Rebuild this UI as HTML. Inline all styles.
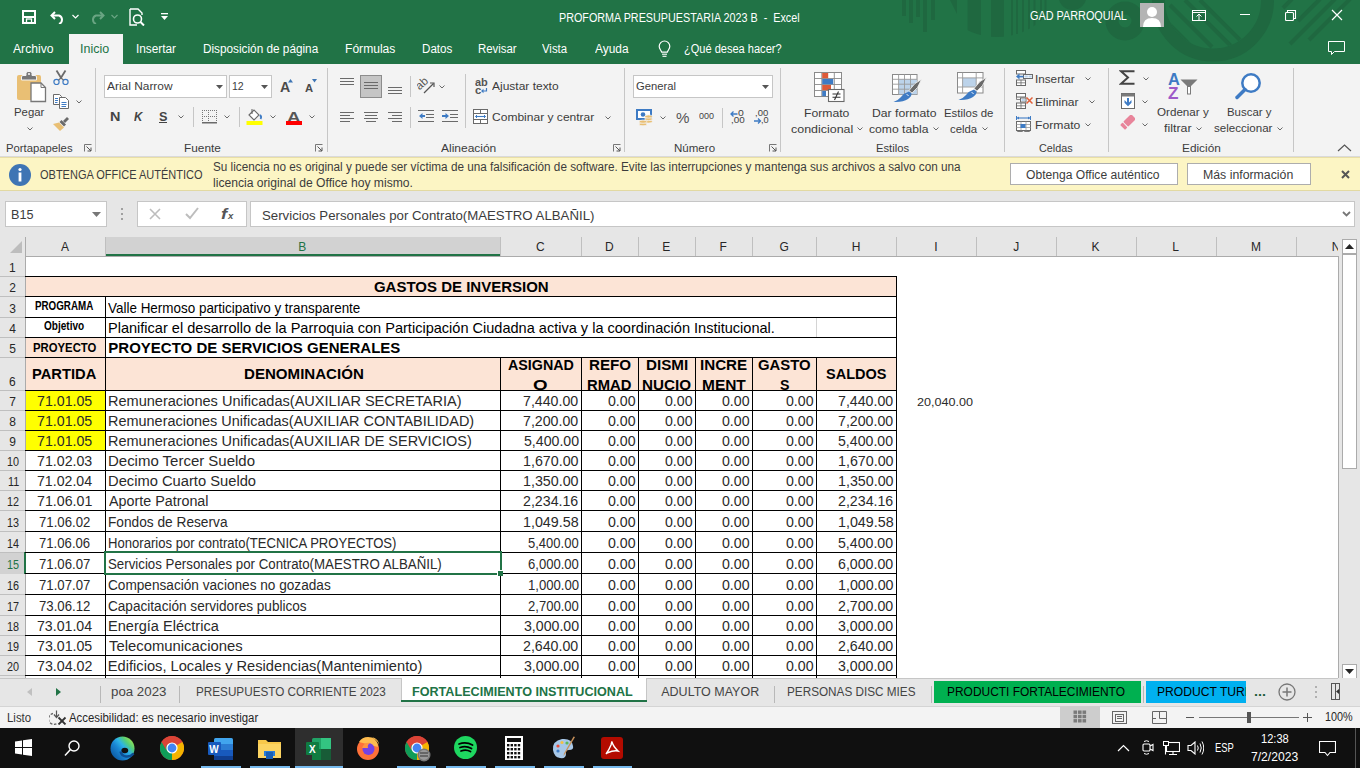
<!DOCTYPE html>
<html><head><meta charset="utf-8"><style>
html,body{margin:0;padding:0;width:1360px;height:768px;overflow:hidden;background:#fff;}
body{position:relative;font-family:"Liberation Sans",sans-serif;}
div,span,svg{position:absolute;}
span{white-space:pre;}
</style></head><body>
<div style="left:0px;top:0px;width:1360px;height:64px;background:#217346;"></div>
<svg style="left:0;top:0" width="1360" height="64"><defs><clipPath id="cc"><circle cx="997" cy="-30" r="67"/></clipPath><clipPath id="ci"><circle cx="1213" cy="0.5" r="48"/></clipPath></defs><rect x="902" y="0" width="4" height="16" fill="#1f6840"/><rect x="909" y="0" width="4" height="23" fill="#1f6840"/><rect x="916" y="0" width="4" height="17" fill="#1f6840"/><rect x="923" y="0" width="4" height="32" fill="#1f6840"/><rect x="931" y="0" width="4" height="20" fill="#1f6840"/><g fill="#1f6840" clip-path="url(#cc)"><polygon points="950,0 957,0 957,14" /><rect x="967.6" y="0" width="13.399999999999977" height="40"/><rect x="991" y="0" width="13" height="40"/><rect x="1011" y="0" width="2" height="40"/><rect x="1016" y="0" width="2" height="40"/><rect x="1022" y="0" width="2" height="40"/><rect x="1028" y="0" width="2" height="40"/><rect x="1033.5" y="0" width="2.0" height="40"/><rect x="1040" y="0" width="2" height="40"/><rect x="1044.5" y="0" width="2.0" height="40"/></g><ellipse cx="1072.5" cy="-4" rx="14" ry="14" fill="#1f6840"/><circle cx="1125" cy="21" r="13" fill="none" stroke="#1f6840" stroke-width="13"/><circle cx="1213" cy="0.5" r="54.5" fill="none" stroke="#1f6840" stroke-width="13"/><g clip-path="url(#ci)"><line x1="1167" y1="22" x2="1197" y2="52" stroke="#1f6840" stroke-width="4"/><line x1="1170" y1="5" x2="1212" y2="47" stroke="#1f6840" stroke-width="4"/><line x1="1185" y1="0" x2="1232" y2="47" stroke="#1f6840" stroke-width="4"/><line x1="1200" y1="0" x2="1240" y2="40" stroke="#1f6840" stroke-width="4"/></g><line x1="1283" y1="8" x2="1292" y2="-1" stroke="#1f6840" stroke-width="4"/><line x1="1298" y1="21" x2="1320" y2="-1" stroke="#1f6840" stroke-width="4"/><line x1="1290" y1="44" x2="1335" y2="-1" stroke="#1f6840" stroke-width="4"/><line x1="1309" y1="40" x2="1350" y2="-1" stroke="#1f6840" stroke-width="4"/></svg>
<svg style="left:22px;top:10px;" width="14" height="14" viewBox="0 0 14 14"><rect x="1" y="1" width="12" height="12" fill="none" stroke="#fff" stroke-width="2"/><rect x="2" y="6" width="10" height="2" fill="#fff"/><rect x="4.5" y="9" width="5" height="4" fill="none" stroke="#fff" stroke-width="1.3"/></svg>
<svg style="left:50px;top:9px;" width="16" height="15" viewBox="0 0 16 15"><path d="M5 3 L1.5 6.5 L5 10" fill="none" stroke="#fff" stroke-width="2"/><path d="M2 6.5 H9 A4.5 4.5 0 0 1 9 15" fill="none" stroke="#fff" stroke-width="2"/></svg>
<svg style="left:72px;top:14px;" width="7" height="5" viewBox="0 0 7 5"><path d="M0.5 1 L3.5 4 L6.5 1" fill="none" stroke="#fff" stroke-width="1.2"/></svg>
<svg style="left:89px;top:9px;" width="16" height="15" viewBox="0 0 16 15"><path d="M11 3 L14.5 6.5 L11 10" fill="none" stroke="#6aa583" stroke-width="2"/><path d="M14 6.5 H7 A4.5 4.5 0 0 0 7 15" fill="none" stroke="#6aa583" stroke-width="2"/></svg>
<svg style="left:111px;top:14px;" width="7" height="5" viewBox="0 0 7 5"><path d="M0.5 1 L3.5 4 L6.5 1" fill="none" stroke="#6aa583" stroke-width="1.2"/></svg>
<svg style="left:129px;top:8px;" width="17" height="18" viewBox="0 0 17 18"><path d="M1 1 H9 L13 5 V7" fill="none" stroke="#fff" stroke-width="1.4"/><path d="M1 1 V17 H8" fill="none" stroke="#fff" stroke-width="1.4"/><circle cx="8.5" cy="11" r="4" fill="none" stroke="#fff" stroke-width="1.6"/><line x1="11.5" y1="14" x2="15" y2="17.5" stroke="#fff" stroke-width="2"/></svg>
<svg style="left:161px;top:13px;" width="7" height="8" viewBox="0 0 7 8"><rect x="0" y="0" width="7" height="1.3" fill="#fff"/><path d="M0 3 H7 L3.5 7 Z" fill="#fff"/></svg>
<span style="left:558.64px;top:11.84px;font-size:12px;line-height:12px;color:#ffffff;transform:scaleX(0.8982);transform-origin:0 0;">PROFORMA PRESUPUESTARIA 2023 B  -  Excel</span>
<span style="left:1030.46px;top:9.84px;font-size:12px;line-height:12px;color:#ffffff;transform:scaleX(0.9045);transform-origin:0 0;">GAD PARROQUIAL</span>
<svg style="left:1140px;top:3px;" width="24" height="24" viewBox="0 0 24 24"><rect width="24" height="24" fill="#b4b4b4"/><circle cx="12" cy="9" r="5" fill="#fff"/><path d="M3 24 Q3 15 12 15 Q21 15 21 24 Z" fill="#fff"/></svg>
<svg style="left:1192px;top:10px;" width="14" height="11" viewBox="0 0 14 11"><rect x="0.5" y="0.5" width="13" height="10" fill="none" stroke="#fff" stroke-width="1"/><line x1="0.5" y1="2.5" x2="13.5" y2="2.5" stroke="#fff" stroke-width="1"/><path d="M4.5 6.5 L7 4 L9.5 6.5 M7 4.5 V10.5" fill="none" stroke="#fff" stroke-width="1"/></svg>
<div style="left:1240px;top:14px;width:10px;height:1px;background:#ffffff;"></div>
<svg style="left:1285px;top:10px;" width="12" height="11" viewBox="0 0 12 11"><rect x="0.5" y="2.5" width="8" height="8" fill="none" stroke="#fff" stroke-width="1.1" rx="1"/><path d="M2.5 2.5 V0.5 H10.5 V8.5 H8.5" fill="none" stroke="#fff" stroke-width="1.1"/></svg>
<svg style="left:1331px;top:9px;" width="12" height="12" viewBox="0 0 12 12"><path d="M1 1 L11 11 M11 1 L1 11" stroke="#fff" stroke-width="1.2"/></svg>
<div style="left:69px;top:34px;width:54px;height:30px;background:#f3f3f3;"></div>
<span style="left:13.00px;top:42.84px;font-size:12px;line-height:12px;color:#ffffff;transform:scaleX(1.0116);transform-origin:0 0;">Archivo</span>
<span style="left:80.38px;top:42.84px;font-size:12px;line-height:12px;color:#217346;transform:scaleX(1.0393);transform-origin:0 0;">Inicio</span>
<span style="left:135.94px;top:42.84px;font-size:12px;line-height:12px;color:#ffffff;transform:scaleX(0.9845);transform-origin:0 0;">Insertar</span>
<span style="left:202.81px;top:42.84px;font-size:12px;line-height:12px;color:#ffffff;transform:scaleX(0.9810);transform-origin:0 0;">Disposición de página</span>
<span style="left:345.03px;top:42.84px;font-size:12px;line-height:12px;color:#ffffff;transform:scaleX(1.0070);transform-origin:0 0;">Fórmulas</span>
<span style="left:421.57px;top:42.84px;font-size:12px;line-height:12px;color:#ffffff;transform:scaleX(0.9686);transform-origin:0 0;">Datos</span>
<span style="left:478.09px;top:42.84px;font-size:12px;line-height:12px;color:#ffffff;transform:scaleX(0.9498);transform-origin:0 0;">Revisar</span>
<span style="left:542.44px;top:42.84px;font-size:12px;line-height:12px;color:#ffffff;transform:scaleX(0.9470);transform-origin:0 0;">Vista</span>
<span style="left:595.00px;top:42.84px;font-size:12px;line-height:12px;color:#ffffff;transform:scaleX(0.9917);transform-origin:0 0;">Ayuda</span>
<svg style="left:658px;top:40px;" width="13" height="18" viewBox="0 0 13 18"><path d="M6.5 1 A5.3 5.3 0 0 1 11.8 6.3 C11.8 9 10 10 9.3 12.2 H3.7 C3 10 1.2 9 1.2 6.3 A5.3 5.3 0 0 1 6.5 1 Z" fill="none" stroke="#fff" stroke-width="1.2"/><line x1="4" y1="14.2" x2="9" y2="14.2" stroke="#fff" stroke-width="1.1"/><line x1="4.5" y1="16.3" x2="8.5" y2="16.3" stroke="#fff" stroke-width="1.1"/></svg>
<span style="left:684.28px;top:42.84px;font-size:12px;line-height:12px;color:#ffffff;transform:scaleX(0.9201);transform-origin:0 0;">¿Qué desea hacer?</span>
<svg style="left:1328px;top:41px;" width="17" height="15" viewBox="0 0 17 15"><path d="M0.5 0.5 H16.5 V10.5 H6.5 L3.5 13.5 V10.5 H0.5 Z" fill="none" stroke="#fff" stroke-width="1"/></svg>
<div style="left:0px;top:64px;width:1360px;height:92px;background:#f3f3f3;"></div>
<div style="left:0px;top:156px;width:1360px;height:1px;background:#dadada;"></div>
<div style="left:95px;top:68px;width:1px;height:84px;background:#c6c6c6;"></div>
<div style="left:327px;top:68px;width:1px;height:84px;background:#c6c6c6;"></div>
<div style="left:624px;top:68px;width:1px;height:84px;background:#c6c6c6;"></div>
<div style="left:780px;top:68px;width:1px;height:84px;background:#c6c6c6;"></div>
<div style="left:1004px;top:68px;width:1px;height:84px;background:#c6c6c6;"></div>
<div style="left:1108px;top:68px;width:1px;height:84px;background:#c6c6c6;"></div>
<div style="left:1293px;top:68px;width:1px;height:84px;background:#c6c6c6;"></div>
<span style="left:6.10px;top:142.56px;font-size:11.5px;line-height:11.5px;color:#3c3c3c;transform:scaleX(0.9816);transform-origin:0 0;">Portapapeles</span>
<span style="left:184.35px;top:142.56px;font-size:11.5px;line-height:11.5px;color:#3c3c3c;transform:scaleX(1.0283);transform-origin:0 0;">Fuente</span>
<span style="left:441.00px;top:142.56px;font-size:11.5px;line-height:11.5px;color:#3c3c3c;transform:scaleX(1.0416);transform-origin:0 0;">Alineación</span>
<span style="left:673.83px;top:142.56px;font-size:11.5px;line-height:11.5px;color:#3c3c3c;transform:scaleX(1.0037);transform-origin:0 0;">Número</span>
<span style="left:875.80px;top:142.56px;font-size:11.5px;line-height:11.5px;color:#3c3c3c;transform:scaleX(0.9771);transform-origin:0 0;">Estilos</span>
<span style="left:1039.21px;top:142.56px;font-size:11.5px;line-height:11.5px;color:#3c3c3c;transform:scaleX(0.9399);transform-origin:0 0;">Celdas</span>
<span style="left:1181.55px;top:142.56px;font-size:11.5px;line-height:11.5px;color:#3c3c3c;transform:scaleX(1.0291);transform-origin:0 0;">Edición</span>
<svg style="left:84px;top:144px;" width="8" height="8" viewBox="0 0 8 8"><path d="M0.5 7.5 V0.5 H7.5" fill="none" stroke="#777" stroke-width="1"/><path d="M2.5 2.5 L7 7 M3.5 7 H7 V3.5" fill="none" stroke="#555" stroke-width="1"/></svg>
<svg style="left:315px;top:144px;" width="8" height="8" viewBox="0 0 8 8"><path d="M0.5 7.5 V0.5 H7.5" fill="none" stroke="#777" stroke-width="1"/><path d="M2.5 2.5 L7 7 M3.5 7 H7 V3.5" fill="none" stroke="#555" stroke-width="1"/></svg>
<svg style="left:613px;top:144px;" width="8" height="8" viewBox="0 0 8 8"><path d="M0.5 7.5 V0.5 H7.5" fill="none" stroke="#777" stroke-width="1"/><path d="M2.5 2.5 L7 7 M3.5 7 H7 V3.5" fill="none" stroke="#555" stroke-width="1"/></svg>
<svg style="left:769px;top:144px;" width="8" height="8" viewBox="0 0 8 8"><path d="M0.5 7.5 V0.5 H7.5" fill="none" stroke="#777" stroke-width="1"/><path d="M2.5 2.5 L7 7 M3.5 7 H7 V3.5" fill="none" stroke="#555" stroke-width="1"/></svg>
<svg style="left:1337px;top:144px;" width="15" height="8" viewBox="0 0 15 8"><path d="M1 7 L7.5 1 L14 7" fill="none" stroke="#555" stroke-width="1.2"/></svg>
<svg style="left:16px;top:71px;" width="31" height="32" viewBox="0 0 31 32"><rect x="1" y="4" width="24" height="25" rx="2" fill="#e9bf74"/><path d="M5.5 9 V6 Q5.5 4.5 7 4.5 H10 V2.5 Q10 0.5 12 0.5 H14 Q16 0.5 16 2.5 V4.5 H19 Q20.5 4.5 20.5 6 V9 Z" fill="#777" stroke="#f3f3f3" stroke-width="1"/><circle cx="13" cy="3" r="1.1" fill="#f3f3f3"/><path d="M15 12 H25 L29.5 16.5 V30.5 H15 Z" fill="#fff" stroke="#777" stroke-width="1.3"/><path d="M25 12 V16.5 H29.5" fill="none" stroke="#777" stroke-width="1"/></svg>
<span style="left:13.84px;top:106.76px;font-size:11.5px;line-height:11.5px;color:#3c3c3c;transform:scaleX(0.9897);transform-origin:0 0;">Pegar</span>
<svg style="left:27px;top:127px;" width="6" height="4" viewBox="0 0 6 4"><path d="M0.5 0.5 L3 3 L5.5 0.5" fill="none" stroke="#6a6a6a" stroke-width="1"/></svg>
<svg style="left:53px;top:70px;" width="16" height="15" viewBox="0 0 16 15"><path d="M3.5 0.5 L8.5 8.5 M12.5 0.5 L7.5 8.5" stroke="#6a6a6a" stroke-width="1.8"/><circle cx="3.5" cy="12" r="2.6" fill="none" stroke="#3e7bc4" stroke-width="1.2"/><circle cx="12.5" cy="12" r="2.6" fill="none" stroke="#3e7bc4" stroke-width="1.2"/><path d="M5.5 10 L8 8 L10.5 10" fill="none" stroke="#6a6a6a" stroke-width="1.2"/></svg>
<svg style="left:53px;top:94px;" width="16" height="15" viewBox="0 0 16 15"><path d="M0.5 0.5 H6.5 L8.5 2.5 V10.5 H0.5 Z" fill="#fff" stroke="#6a6a6a"/><path d="M6.5 3.5 H12.5 L15.5 6.5 V14.5 H6.5 Z" fill="#fff" stroke="#6a6a6a"/><path d="M2 4.5 H5 M2 6.5 H5 M2 8.5 H4.5 M8.5 8.5 H13.5 M8.5 10.5 H13.5 M8.5 12.5 H13" stroke="#3e7bc4" stroke-width="1"/></svg>
<svg style="left:76px;top:100px;" width="6" height="4" viewBox="0 0 6 4"><path d="M0.5 0.5 L3 3 L5.5 0.5" fill="none" stroke="#6a6a6a" stroke-width="1"/></svg>
<svg style="left:53px;top:116px;" width="16" height="15" viewBox="0 0 16 15"><path d="M10 5 L14 1 L16 3 L12 7 Z" fill="#6a6a6a"/><path d="M8.5 4 L13 8.5 L11 10.5 L6.5 6 Z" fill="#6a6a6a"/><path d="M6 6.5 L11 11.5 L7 15 L0 8 Z" fill="#e9bf74"/></svg>
<div style="left:104px;top:75px;width:123px;height:23px;background:#fff;box-sizing:border-box;border:1px solid #c6c6c6;"></div>
<span style="left:107.00px;top:81.26px;font-size:11.5px;line-height:11.5px;color:#3c3c3c;transform:scaleX(1.0362);transform-origin:0 0;">Arial Narrow</span>
<svg style="left:216px;top:85px;" width="7" height="4" viewBox="0 0 7 4"><path d="M0 0 H7 L3.5 4 Z" fill="#555"/></svg>
<div style="left:229px;top:75px;width:43px;height:23px;background:#fff;box-sizing:border-box;border:1px solid #c6c6c6;"></div>
<span style="left:231.81px;top:81.26px;font-size:11.5px;line-height:11.5px;color:#3c3c3c;transform:scaleX(0.9181);transform-origin:0 0;">12</span>
<svg style="left:261px;top:85px;" width="7" height="4" viewBox="0 0 7 4"><path d="M0 0 H7 L3.5 4 Z" fill="#555"/></svg>
<span style="left:280.15px;top:80.14px;font-size:14px;line-height:14px;color:#4a4a4a;font-weight:700;transform:scaleX(1.0128);transform-origin:0 0;">A</span>
<svg style="left:288px;top:79px;" width="6" height="3.5" viewBox="0 0 6 3.5"><path d="M0 3.5 L2.5 0 L5 3.5 Z" fill="#3e75b4"/></svg>
<span style="left:305.22px;top:82.68px;font-size:11px;line-height:11px;color:#4a4a4a;font-weight:700;transform:scaleX(1.0176);transform-origin:0 0;">A</span>
<svg style="left:312px;top:79px;" width="6" height="3.5" viewBox="0 0 6 3.5"><path d="M0 0 L2.5 3.5 L5 0 Z" fill="#3e75b4"/></svg>
<span style="left:109.96px;top:110.64px;font-size:12px;line-height:12px;color:#444;font-weight:700;transform:scaleX(1.2006);transform-origin:0 0;">N</span>
<span style="left:133.57px;top:110.64px;font-size:12px;line-height:12px;color:#444;font-weight:700;font-style:italic;transform:scaleX(0.9649);transform-origin:0 0;">K</span>
<span style="left:159.02px;top:110.64px;font-size:12px;line-height:12px;color:#444;font-weight:700;transform:scaleX(1.0556);transform-origin:0 0;">S</span>
<div style="left:159px;top:122px;width:8px;height:1px;background:#444;"></div>
<svg style="left:178px;top:115px;" width="6" height="4" viewBox="0 0 6 4"><path d="M0.5 0.5 L3 3 L5.5 0.5" fill="none" stroke="#6a6a6a" stroke-width="1"/></svg>
<div style="left:193px;top:107px;width:1px;height:20px;background:#c6c6c6;"></div>
<svg style="left:202px;top:110px;" width="15" height="14" viewBox="0 0 15 14"><rect x="0" y="0" width="1" height="1" fill="#777"/><rect x="0" y="2" width="1" height="1" fill="#777"/><rect x="0" y="4" width="1" height="1" fill="#777"/><rect x="0" y="6" width="1" height="1" fill="#777"/><rect x="0" y="8" width="1" height="1" fill="#777"/><rect x="0" y="10" width="1" height="1" fill="#777"/><rect x="0" y="12" width="1" height="1" fill="#777"/><rect x="2" y="0" width="1" height="1" fill="#777"/><rect x="2" y="6" width="1" height="1" fill="#777"/><rect x="2" y="12" width="1" height="1" fill="#777"/><rect x="4" y="0" width="1" height="1" fill="#777"/><rect x="4" y="6" width="1" height="1" fill="#777"/><rect x="4" y="12" width="1" height="1" fill="#777"/><rect x="6" y="0" width="1" height="1" fill="#777"/><rect x="6" y="2" width="1" height="1" fill="#777"/><rect x="6" y="4" width="1" height="1" fill="#777"/><rect x="6" y="6" width="1" height="1" fill="#777"/><rect x="6" y="8" width="1" height="1" fill="#777"/><rect x="6" y="10" width="1" height="1" fill="#777"/><rect x="6" y="12" width="1" height="1" fill="#777"/><rect x="8" y="0" width="1" height="1" fill="#777"/><rect x="8" y="6" width="1" height="1" fill="#777"/><rect x="8" y="12" width="1" height="1" fill="#777"/><rect x="10" y="0" width="1" height="1" fill="#777"/><rect x="10" y="6" width="1" height="1" fill="#777"/><rect x="10" y="12" width="1" height="1" fill="#777"/><rect x="12" y="0" width="1" height="1" fill="#777"/><rect x="12" y="6" width="1" height="1" fill="#777"/><rect x="12" y="12" width="1" height="1" fill="#777"/><rect x="14" y="0" width="1" height="1" fill="#777"/><rect x="14" y="2" width="1" height="1" fill="#777"/><rect x="14" y="4" width="1" height="1" fill="#777"/><rect x="14" y="6" width="1" height="1" fill="#777"/><rect x="14" y="8" width="1" height="1" fill="#777"/><rect x="14" y="10" width="1" height="1" fill="#777"/><rect x="14" y="12" width="1" height="1" fill="#777"/><rect x="0" y="12" width="15" height="1.5" fill="#6a6a6a"/></svg>
<svg style="left:224px;top:115px;" width="6" height="4" viewBox="0 0 6 4"><path d="M0.5 0.5 L3 3 L5.5 0.5" fill="none" stroke="#6a6a6a" stroke-width="1"/></svg>
<div style="left:239px;top:107px;width:1px;height:20px;background:#c6c6c6;"></div>
<svg style="left:246px;top:108px;" width="18" height="17" viewBox="0 0 18 17"><path d="M3 7 L8 2 L13 7 L8 12 Z" fill="#fff" stroke="#6a6a6a" stroke-width="1.1"/><line x1="6" y1="1" x2="6" y2="6" stroke="#6a6a6a" stroke-width="1.1"/><path d="M14 7 Q16 9 14.5 11" fill="none" stroke="#3e7bc4" stroke-width="1.8"/><rect x="0.5" y="13" width="16" height="4" fill="#ffff00"/></svg>
<svg style="left:270px;top:115px;" width="6" height="4" viewBox="0 0 6 4"><path d="M0.5 0.5 L3 3 L5.5 0.5" fill="none" stroke="#6a6a6a" stroke-width="1"/></svg>
<span style="left:287.03px;top:109.64px;font-size:14px;line-height:14px;color:#555;font-weight:700;transform:scaleX(1.3326);transform-origin:0 0;">A</span>
<div style="left:286px;top:121px;width:16px;height:4px;background:#ff0000;"></div>
<svg style="left:309px;top:115px;" width="6" height="4" viewBox="0 0 6 4"><path d="M0.5 0.5 L3 3 L5.5 0.5" fill="none" stroke="#6a6a6a" stroke-width="1"/></svg>
<svg style="left:340px;top:78px;" width="14" height="9" viewBox="0 0 14 9"><rect x="0" y="0" width="14" height="1" fill="#6a6a6a"/><rect x="0" y="3" width="14" height="1" fill="#6a6a6a"/><rect x="0" y="6" width="14" height="1" fill="#6a6a6a"/></svg>
<div style="left:360px;top:75px;width:22px;height:23px;background:#c5c5c5;box-sizing:border-box;border:1px solid #8c8c8c;"></div>
<svg style="left:364px;top:82px;" width="14" height="9" viewBox="0 0 14 9"><rect x="0" y="0" width="14" height="1" fill="#6a6a6a"/><rect x="0" y="3" width="14" height="1" fill="#6a6a6a"/><rect x="0" y="6" width="14" height="1" fill="#6a6a6a"/></svg>
<svg style="left:388px;top:87px;" width="14" height="9" viewBox="0 0 14 9"><rect x="0" y="0" width="14" height="1" fill="#6a6a6a"/><rect x="0" y="3" width="14" height="1" fill="#6a6a6a"/><rect x="0" y="6" width="14" height="1" fill="#6a6a6a"/></svg>
<div style="left:410px;top:76px;width:1px;height:21px;background:#c6c6c6;"></div>
<svg style="left:417px;top:77px;" width="19" height="17" viewBox="0 0 19 17"><text x="0" y="0" transform="translate(2.5,13.5) rotate(-42)" font-family="Liberation Sans" font-size="11.5" fill="#555">ab</text><line x1="7" y1="16" x2="16.5" y2="6.5" stroke="#555" stroke-width="1.2"/><path d="M13 6 H17 V10" fill="none" stroke="#555" stroke-width="1.2"/></svg>
<svg style="left:439px;top:85px;" width="6" height="4" viewBox="0 0 6 4"><path d="M0.5 0.5 L3 3 L5.5 0.5" fill="none" stroke="#6a6a6a" stroke-width="1"/></svg>
<div style="left:465px;top:74px;width:1px;height:54px;background:#c6c6c6;"></div>
<svg style="left:340px;top:112px;" width="14" height="12" viewBox="0 0 14 12"><rect x="0" y="0" width="14" height="1" fill="#6a6a6a"/><rect x="0" y="3" width="10" height="1" fill="#6a6a6a"/><rect x="0" y="6" width="14" height="1" fill="#6a6a6a"/><rect x="0" y="9" width="10" height="1" fill="#6a6a6a"/></svg>
<svg style="left:364px;top:112px;" width="14" height="12" viewBox="0 0 14 12"><rect x="0.0" y="0" width="14" height="1" fill="#6a6a6a"/><rect x="1.0" y="3" width="12" height="1" fill="#6a6a6a"/><rect x="0.0" y="6" width="14" height="1" fill="#6a6a6a"/><rect x="2.0" y="9" width="10" height="1" fill="#6a6a6a"/></svg>
<svg style="left:388px;top:112px;" width="14" height="12" viewBox="0 0 14 12"><rect x="0" y="0" width="14" height="1" fill="#6a6a6a"/><rect x="4" y="3" width="10" height="1" fill="#6a6a6a"/><rect x="0" y="6" width="14" height="1" fill="#6a6a6a"/><rect x="4" y="9" width="10" height="1" fill="#6a6a6a"/></svg>
<div style="left:410px;top:107px;width:1px;height:21px;background:#c6c6c6;"></div>
<svg style="left:418px;top:110px;" width="16" height="13" viewBox="0 0 16 13"><rect x="0" y="0" width="16" height="1" fill="#6a6a6a"/><rect x="8" y="4" width="8" height="1" fill="#6a6a6a"/><rect x="8" y="7" width="8" height="1" fill="#6a6a6a"/><rect x="0" y="11" width="16" height="1" fill="#6a6a6a"/><path d="M1 6 L4.5 3 V5 H7 V7 H4.5 V9 Z" fill="#3e7bc4"/></svg>
<svg style="left:442px;top:110px;" width="16" height="13" viewBox="0 0 16 13"><rect x="0" y="0" width="16" height="1" fill="#6a6a6a"/><rect x="8" y="4" width="8" height="1" fill="#6a6a6a"/><rect x="8" y="7" width="8" height="1" fill="#6a6a6a"/><rect x="0" y="11" width="16" height="1" fill="#6a6a6a"/><path d="M7 6 L3.5 3 V5 H0 V7 H3.5 V9 Z" fill="#3e7bc4"/></svg>
<span style="left:474.67px;top:76.71px;font-size:10.5px;line-height:10.5px;color:#555;font-weight:700;transform:scaleX(1.0437);transform-origin:0 0;">ab</span>
<span style="left:474.55px;top:84.68px;font-size:11px;line-height:11px;color:#555;font-weight:700;transform:scaleX(1.0309);transform-origin:0 0;">c</span>
<svg style="left:481px;top:88px;" width="7" height="6" viewBox="0 0 7 6"><path d="M5.5 0 V3 H2" fill="none" stroke="#3e7bc4" stroke-width="1.2"/><path d="M0 3 L2.5 0.8 V5.2 Z" fill="#3e7bc4"/></svg>
<span style="left:491.90px;top:81.16px;font-size:11.5px;line-height:11.5px;color:#3c3c3c;transform:scaleX(1.0422);transform-origin:0 0;">Ajustar texto</span>
<svg style="left:473px;top:109px;" width="15" height="15" viewBox="0 0 15 15"><rect x="0.5" y="0.5" width="14" height="14" fill="#fff" stroke="#6a6a6a"/><path d="M0.5 4.5 H14.5 M0.5 10.5 H14.5 M7.5 0.5 V4.5 M7.5 10.5 V14.5" stroke="#6a6a6a" fill="none"/><path d="M2.5 7.5 H12.5" stroke="#3e7bc4" stroke-width="1.1"/><path d="M4 6 L2.5 7.5 L4 9 M11 6 L12.5 7.5 L11 9" stroke="#3e7bc4" fill="none"/></svg>
<span style="left:491.90px;top:112.01px;font-size:11.5px;line-height:11.5px;color:#3c3c3c;transform:scaleX(1.0464);transform-origin:0 0;">Combinar y centrar</span>
<svg style="left:605px;top:116px;" width="6" height="4" viewBox="0 0 6 4"><path d="M0.5 0.5 L3 3 L5.5 0.5" fill="none" stroke="#6a6a6a" stroke-width="1"/></svg>
<div style="left:633px;top:75px;width:140px;height:23px;background:#fff;box-sizing:border-box;border:1px solid #c6c6c6;"></div>
<span style="left:636.44px;top:81.16px;font-size:11.5px;line-height:11.5px;color:#3c3c3c;transform:scaleX(0.9757);transform-origin:0 0;">General</span>
<svg style="left:762px;top:85px;" width="7" height="4" viewBox="0 0 7 4"><path d="M0 0 H7 L3.5 4 Z" fill="#555"/></svg>
<svg style="left:636px;top:109px;" width="17" height="17" viewBox="0 0 17 17"><rect x="1" y="1" width="14" height="9" fill="#fff" stroke="#3e7bc4" stroke-width="2"/><circle cx="7" cy="5.5" r="2.3" fill="#3e7bc4"/><g fill="#e9bf74" stroke="#f3f3f3" stroke-width="0.8"><ellipse cx="12.5" cy="12.5" rx="3.8" ry="1.6"/><ellipse cx="12.5" cy="10" rx="3.8" ry="1.6"/><ellipse cx="12.5" cy="7.5" rx="3.8" ry="1.6"/><ellipse cx="7" cy="15.2" rx="3.8" ry="1.6"/><ellipse cx="7" cy="12.7" rx="3.8" ry="1.6"/></g></svg>
<svg style="left:660px;top:116px;" width="6" height="4" viewBox="0 0 6 4"><path d="M0.5 0.5 L3 3 L5.5 0.5" fill="none" stroke="#6a6a6a" stroke-width="1"/></svg>
<span style="left:676.47px;top:110.92px;font-size:14.5px;line-height:14.5px;color:#555;transform:scaleX(1.0429);transform-origin:0 0;">%</span>
<span style="left:699.39px;top:112.38px;font-size:9px;line-height:9px;color:#444;transform:scaleX(0.9958);transform-origin:0 0;">000</span>
<div style="left:722px;top:108px;width:1px;height:20px;background:#c6c6c6;"></div>
<span style="left:737.58px;top:109.10px;font-size:8.5px;line-height:8.5px;color:#444;transform:scaleX(1.2255);transform-origin:0 0;">0</span>
<span style="left:730.61px;top:116.30px;font-size:8.5px;line-height:8.5px;color:#444;transform:scaleX(1.1625);transform-origin:0 0;">,00</span>
<svg style="left:729.5px;top:110.5px;" width="8" height="6" viewBox="0 0 8 6"><path d="M1 3 H7.5 M3.5 0.5 L1 3 L3.5 5.5" fill="none" stroke="#3e7bc4" stroke-width="1.3"/></svg>
<span style="left:755.15px;top:109.10px;font-size:8.5px;line-height:8.5px;color:#444;transform:scaleX(1.1160);transform-origin:0 0;">,00</span>
<span style="left:761.18px;top:116.30px;font-size:8.5px;line-height:8.5px;color:#444;transform:scaleX(1.0771);transform-origin:0 0;">,0</span>
<svg style="left:753.5px;top:117.5px;" width="8" height="6" viewBox="0 0 8 6"><path d="M0 3 H6.5 M4 0.5 L6.5 3 L4 5.5" fill="none" stroke="#3e7bc4" stroke-width="1.3"/></svg>
<svg style="left:805px;top:66px;" width="190" height="40" viewBox="0 0 190 40"><rect x="9.5" y="6.5" width="27" height="24" fill="#fff" stroke="#8a8a8a"/><path d="M16.8 6.5 V30.5 M29.3 6.5 V30.5 M9.5 12.5 H36.5 M9.5 18.5 H36.5 M9.5 24.5 H36.5" stroke="#8a8a8a" stroke-width="0.9"/><rect x="17.2" y="7" width="6" height="5.2" fill="#dd5a38"/><rect x="17.2" y="13" width="11" height="5.2" fill="#3e7bc4"/><rect x="17.2" y="19" width="8.8" height="5.2" fill="#dd5a38"/><rect x="17.2" y="25" width="3.8" height="5.2" fill="#3e7bc4"/><rect x="23.5" y="23.5" width="15.5" height="12" fill="#fff" stroke="#6a6a6a" stroke-width="1.1"/><path d="M27.5 28 H35.5 M27.5 31.2 H35.5 M29.5 34 L33.5 25.5" stroke="#333" stroke-width="1.1"/><rect x="87.5" y="8.5" width="24.5" height="20" fill="#fff" stroke="#8a8a8a"/><rect x="93.6" y="13.3" width="18.2" height="15" fill="#bcd3ea"/><path d="M93.6 8.5 V28.5 M99.5 8.5 V28.5 M105.5 8.5 V28.5 M87.5 13.3 H112 M87.5 18.2 H112 M87.5 23.2 H112" stroke="#9a9a9a" stroke-width="0.9"/><path d="M116.5 13.5 L110 17.5 L104 24.5 L107 27 L112.5 21.5 Z" fill="#6a6a6a" stroke="#f3f3f3" stroke-width="0.8"/><path d="M104 25.5 Q99 27 96 31 Q93 34.5 88.5 36 Q98 36.5 103 33 Q107 30 106.5 27.5 Z" fill="#3e7bc4"/><path d="M101.5 28.5 Q103 28.5 103.5 30" stroke="#fff" stroke-width="0.8" fill="none"/><rect x="152.5" y="6.5" width="25.5" height="20.5" fill="#fff" stroke="#8a8a8a"/><rect x="157.6" y="11.9" width="13.6" height="9" fill="#bcd3ea"/><path d="M157.6 6.5 V27 M171.2 6.5 V27 M152.5 11.9 H178 M152.5 21 H178" stroke="#9a9a9a" stroke-width="0.9"/><path d="M181.5 11.5 L175 15.5 L169 22.5 L172 25 L177.5 19.5 Z" fill="#6a6a6a" stroke="#f3f3f3" stroke-width="0.8"/><path d="M169 23.5 Q164 25 161 29 Q158 32.5 153.5 34 Q163 34.5 168 31 Q172 28 171.5 25.5 Z" fill="#3e7bc4"/><path d="M166.5 26.5 Q168 26.5 168.5 28" stroke="#fff" stroke-width="0.8" fill="none"/></svg>
<span style="left:804.42px;top:107.56px;font-size:11.5px;line-height:11.5px;color:#3c3c3c;transform:scaleX(1.0604);transform-origin:0 0;">Formato</span>
<span style="left:791.30px;top:124.06px;font-size:11.5px;line-height:11.5px;color:#3c3c3c;transform:scaleX(1.0818);transform-origin:0 0;">condicional</span>
<svg style="left:857px;top:127px;" width="6" height="4" viewBox="0 0 6 4"><path d="M0.5 0.5 L3 3 L5.5 0.5" fill="none" stroke="#6a6a6a" stroke-width="1"/></svg>
<span style="left:872.42px;top:107.56px;font-size:11.5px;line-height:11.5px;color:#3c3c3c;transform:scaleX(1.0617);transform-origin:0 0;">Dar formato</span>
<span style="left:869.11px;top:124.06px;font-size:11.5px;line-height:11.5px;color:#3c3c3c;transform:scaleX(1.0560);transform-origin:0 0;">como tabla</span>
<svg style="left:933px;top:127px;" width="6" height="4" viewBox="0 0 6 4"><path d="M0.5 0.5 L3 3 L5.5 0.5" fill="none" stroke="#6a6a6a" stroke-width="1"/></svg>
<span style="left:944.49px;top:107.56px;font-size:11.5px;line-height:11.5px;color:#3c3c3c;transform:scaleX(0.9914);transform-origin:0 0;">Estilos de</span>
<span style="left:950.35px;top:124.06px;font-size:11.5px;line-height:11.5px;color:#3c3c3c;transform:scaleX(0.9880);transform-origin:0 0;">celda</span>
<svg style="left:982px;top:127px;" width="6" height="4" viewBox="0 0 6 4"><path d="M0.5 0.5 L3 3 L5.5 0.5" fill="none" stroke="#6a6a6a" stroke-width="1"/></svg>
<svg style="left:1016px;top:70px;" width="17" height="16" viewBox="0 0 17 16"><g fill="#fff" stroke="#6a6a6a" stroke-width="1"><rect x="0.5" y="0.5" width="9" height="3.5"/><rect x="0.5" y="10" width="9" height="5.5"/><rect x="7.5" y="4.5" width="9" height="4"/></g><path d="M5 10 V15.5 M0.5 12.8 H9.5" stroke="#6a6a6a" stroke-width="0.8"/><rect x="8.5" y="5.5" width="3.3" height="2" fill="#bcd3ea"/><rect x="12.5" y="5.5" width="3.3" height="2" fill="#bcd3ea"/><path d="M0 6.5 L3.5 3.5 V9.5 Z" fill="#3e7bc4"/><rect x="3" y="5.8" width="4.5" height="1.6" fill="#3e7bc4"/></svg>
<span style="left:1034.55px;top:73.96px;font-size:11.5px;line-height:11.5px;color:#3c3c3c;transform:scaleX(1.0180);transform-origin:0 0;">Insertar</span>
<svg style="left:1085px;top:77px;" width="6" height="4" viewBox="0 0 6 4"><path d="M0.5 0.5 L3 3 L5.5 0.5" fill="none" stroke="#6a6a6a" stroke-width="1"/></svg>
<svg style="left:1016px;top:93px;" width="17" height="16" viewBox="0 0 17 16"><g fill="#fff" stroke="#6a6a6a" stroke-width="1"><rect x="0.5" y="0.5" width="9" height="3.5"/><rect x="0.5" y="10" width="9" height="5.5"/><rect x="4.5" y="5" width="5.5" height="4"/></g><path d="M5 10 V15.5 M0.5 12.8 H9.5 M0.5 4 V6.5 H4.5" fill="none" stroke="#6a6a6a" stroke-width="0.8"/><rect x="5.5" y="6" width="3.5" height="2" fill="#bcd3ea"/><path d="M10.5 4.5 L16.5 10.5 M16.5 4.5 L10.5 10.5" stroke="#e0603a" stroke-width="1.5"/></svg>
<span style="left:1034.63px;top:96.86px;font-size:11.5px;line-height:11.5px;color:#3c3c3c;transform:scaleX(1.0489);transform-origin:0 0;">Eliminar</span>
<svg style="left:1089px;top:100px;" width="6" height="4" viewBox="0 0 6 4"><path d="M0.5 0.5 L3 3 L5.5 0.5" fill="none" stroke="#6a6a6a" stroke-width="1"/></svg>
<svg style="left:1016px;top:116px;" width="16" height="16" viewBox="0 0 16 16"><path d="M0.5 0 V4 M14.5 0 V4" stroke="#3e7bc4" stroke-width="1"/><path d="M1 2 H14" stroke="#3e7bc4" stroke-width="1.1"/><path d="M1 2 L3 0.5 V3.5 Z M14 2 L12 0.5 V3.5 Z" fill="#3e7bc4"/><rect x="0.5" y="5.5" width="14" height="9" fill="#fff" stroke="#6a6a6a"/><path d="M0.5 8.5 H14.5 M0.5 11.5 H14.5 M5 5.5 V14.5 M10 5.5 V14.5" stroke="#9a9a9a" stroke-width="0.8"/><path d="M1 14.5 Q1 15.5 2 15.5 H6 Q7 15.5 7 14.5 M8 14.5 Q8 15.5 9 15.5 H13 Q14 15.5 14 14.5" fill="none" stroke="#6a6a6a" stroke-width="0.9"/><rect x="4.5" y="8" width="5" height="4" fill="#3e7bc4"/></svg>
<span style="left:1034.63px;top:119.66px;font-size:11.5px;line-height:11.5px;color:#3c3c3c;transform:scaleX(1.0580);transform-origin:0 0;">Formato</span>
<svg style="left:1085px;top:123px;" width="6" height="4" viewBox="0 0 6 4"><path d="M0.5 0.5 L3 3 L5.5 0.5" fill="none" stroke="#6a6a6a" stroke-width="1"/></svg>
<svg style="left:1119px;top:69px;" width="17" height="17" viewBox="0 0 17 17"><path d="M15.5 2.2 H2 L9 8.5 L2 14.8 H15.5" fill="none" stroke="#444" stroke-width="2" stroke-linejoin="miter"/></svg>
<svg style="left:1143px;top:77px;" width="6" height="4" viewBox="0 0 6 4"><path d="M0.5 0.5 L3 3 L5.5 0.5" fill="none" stroke="#6a6a6a" stroke-width="1"/></svg>
<svg style="left:1121px;top:93px;" width="14" height="16" viewBox="0 0 14 16"><rect x="0.5" y="0.5" width="13" height="15" fill="#fff" stroke="#6a6a6a"/><rect x="0.5" y="0.5" width="13" height="3" fill="#7a7a7a"/><path d="M6 5 H8 V9.5 L10.5 7 V9.8 L7 13.3 L3.5 9.8 V7 L6 9.5 Z" fill="#3e7bc4"/></svg>
<svg style="left:1142px;top:100px;" width="6" height="4" viewBox="0 0 6 4"><path d="M0.5 0.5 L3 3 L5.5 0.5" fill="none" stroke="#6a6a6a" stroke-width="1"/></svg>
<svg style="left:1120px;top:115px;" width="15" height="15" viewBox="0 0 15 15"><g transform="rotate(-45 7.5 7.5)" fill="#e8849a"><rect x="5" y="4" width="11" height="7" rx="1"/><rect x="0.5" y="4" width="3.5" height="7" rx="0.8"/></g></svg>
<svg style="left:1142px;top:123px;" width="6" height="4" viewBox="0 0 6 4"><path d="M0.5 0.5 L3 3 L5.5 0.5" fill="none" stroke="#6a6a6a" stroke-width="1"/></svg>
<span style="left:1167.59px;top:71.02px;font-size:16.5px;line-height:16.5px;color:#3e7bc4;font-weight:700;transform:scaleX(0.9950);transform-origin:0 0;">A</span>
<span style="left:1168.49px;top:85.02px;font-size:16.5px;line-height:16.5px;color:#9d5ac8;font-weight:700;transform:scaleX(1.0374);transform-origin:0 0;">Z</span>
<svg style="left:1180px;top:79px;" width="18" height="16" viewBox="0 0 18 16"><path d="M0.5 0.5 H17.5 L11 7 V15.5 H7 V7 Z" fill="#7a7a7a"/><path d="M8 8 V14.5 H10 V8" fill="#fff"/></svg>
<svg style="left:1234px;top:72px;" width="29" height="28" viewBox="0 0 29 28"><circle cx="17" cy="11" r="8.7" fill="#fff" stroke="#3e7bc4" stroke-width="2.5"/><line x1="3" y1="25.5" x2="11" y2="17.5" stroke="#3e7bc4" stroke-width="3.5" stroke-linecap="round"/></svg>
<span style="left:1157.28px;top:107.26px;font-size:11.5px;line-height:11.5px;color:#3c3c3c;transform:scaleX(1.0119);transform-origin:0 0;">Ordenar y</span>
<span style="left:1164.21px;top:123.26px;font-size:11.5px;line-height:11.5px;color:#3c3c3c;transform:scaleX(1.0800);transform-origin:0 0;">filtrar</span>
<svg style="left:1196px;top:127px;" width="6" height="4" viewBox="0 0 6 4"><path d="M0.5 0.5 L3 3 L5.5 0.5" fill="none" stroke="#6a6a6a" stroke-width="1"/></svg>
<span style="left:1226.79px;top:107.26px;font-size:11.5px;line-height:11.5px;color:#3c3c3c;transform:scaleX(0.9928);transform-origin:0 0;">Buscar y</span>
<span style="left:1214.35px;top:123.26px;font-size:11.5px;line-height:11.5px;color:#3c3c3c;transform:scaleX(1.0049);transform-origin:0 0;">seleccionar</span>
<svg style="left:1277px;top:127px;" width="6" height="4" viewBox="0 0 6 4"><path d="M0.5 0.5 L3 3 L5.5 0.5" fill="none" stroke="#6a6a6a" stroke-width="1"/></svg>
<div style="left:0px;top:157px;width:1360px;height:34px;background:#fcf5c4;"></div>
<div style="left:0px;top:157px;width:1360px;height:1px;background:#e8dea6;"></div>
<div style="left:0px;top:190px;width:1360px;height:1px;background:#e2d9a2;"></div>
<svg style="left:9px;top:164px;" width="22" height="22" viewBox="0 0 22 22"><circle cx="11" cy="11" r="11" fill="#3f75b4"/><circle cx="11" cy="5.5" r="1.6" fill="#fff"/><rect x="9.6" y="8.5" width="2.8" height="9" fill="#fff"/></svg>
<span style="left:40.01px;top:168.59px;font-size:12px;line-height:12px;color:#3c3c3c;transform:scaleX(0.9165);transform-origin:0 0;">OBTENGA OFFICE AUTÉNTICO</span>
<span style="left:213.22px;top:160.84px;font-size:12px;line-height:12px;color:#3c3c3c;transform:scaleX(0.9771);transform-origin:0 0;">Su licencia no es original y puede ser víctima de una falsificación de software. Evite las interrupciones y mantenga sus archivos a salvo con una</span>
<span style="left:212.96px;top:176.84px;font-size:12px;line-height:12px;color:#3c3c3c;transform:scaleX(1.0104);transform-origin:0 0;">licencia original de Office hoy mismo.</span>
<div style="left:1010px;top:163px;width:168px;height:22px;background:#fff;box-sizing:border-box;border:1px solid #adadad;"></div>
<span style="left:1026.16px;top:168.84px;font-size:12px;line-height:12px;color:#3c3c3c;transform:scaleX(1.0075);transform-origin:0 0;">Obtenga Office auténtico</span>
<div style="left:1187px;top:163px;width:124px;height:22px;background:#fff;box-sizing:border-box;border:1px solid #adadad;"></div>
<span style="left:1202.52px;top:168.84px;font-size:12px;line-height:12px;color:#3c3c3c;transform:scaleX(1.0257);transform-origin:0 0;">Más información</span>
<svg style="left:1341px;top:170px;" width="9" height="9" viewBox="0 0 9 9"><path d="M1 1 L8 8 M8 1 L1 8" stroke="#555" stroke-width="2"/></svg>
<div style="left:0px;top:191px;width:1360px;height:46px;background:#e6e6e6;"></div>
<div style="left:5px;top:201px;width:102px;height:26px;background:#fff;box-sizing:border-box;border:1px solid #c6c6c6;"></div>
<span style="left:11.49px;top:209.01px;font-size:12.5px;line-height:12.5px;color:#3c3c3c;transform:scaleX(1.0120);transform-origin:0 0;">B15</span>
<svg style="left:92px;top:212px;" width="9" height="5" viewBox="0 0 9 5"><path d="M0 0 H9 L4.5 5 Z" fill="#777"/></svg>
<div style="left:121px;top:208px;width:2px;height:2px;background:#a0a0a0;"></div>
<div style="left:121px;top:213px;width:2px;height:2px;background:#a0a0a0;"></div>
<div style="left:121px;top:218px;width:2px;height:2px;background:#a0a0a0;"></div>
<div style="left:137px;top:201px;width:110px;height:26px;background:#fff;box-sizing:border-box;border:1px solid #c6c6c6;"></div>
<svg style="left:149px;top:208px;" width="12" height="12" viewBox="0 0 12 12"><path d="M1 1 L11 11 M11 1 L1 11" stroke="#bdbdbd" stroke-width="1.6"/></svg>
<svg style="left:185px;top:207px;" width="14" height="13" viewBox="0 0 14 13"><path d="M1 7 L5 11 L13 1" fill="none" stroke="#bdbdbd" stroke-width="2"/></svg>
<span style="left:221.36px;top:207.14px;font-size:14px;line-height:14px;color:#555;font-weight:700;font-style:italic;transform:scaleX(1.3158);transform-origin:0 0;font-family:"Liberation Serif";">f</span>
<span style="left:228.38px;top:212.38px;font-size:9px;line-height:9px;color:#555;font-weight:700;font-style:italic;transform:scaleX(1.0582);transform-origin:0 0;font-family:"Liberation Serif";">x</span>
<div style="left:250px;top:201px;width:1105px;height:26px;background:#fff;box-sizing:border-box;border:1px solid #c6c6c6;"></div>
<span style="left:261.80px;top:208.59px;font-size:13px;line-height:13px;color:#3c3c3c;transform:scaleX(1.0179);transform-origin:0 0;">Servicios Personales por Contrato(MAESTRO ALBAÑIL)</span>
<svg style="left:1342px;top:211px;" width="9" height="6" viewBox="0 0 9 6"><path d="M1 1 L4.5 4.5 L8 1" fill="none" stroke="#777" stroke-width="1.8"/></svg>
<div style="left:0px;top:237px;width:1338px;height:20px;background:#e6e6e6;"></div>
<div style="left:0px;top:256px;width:1338px;height:1px;background:#ababab;"></div>
<div style="left:0px;top:237px;width:25px;height:441px;background:#e6e6e6;"></div>
<div style="left:25px;top:237px;width:1px;height:441px;background:#ababab;"></div>
<svg style="left:10px;top:241px;" width="12" height="12" viewBox="0 0 12 12"><path d="M12 0 V12 H0 Z" fill="#bdbdbd"/></svg>
<div style="left:26px;top:257px;width:1312px;height:421px;background:#fff;"></div>
<div style="left:105px;top:237px;width:395px;height:19px;background:#d2d2d2;"></div>
<div style="left:105px;top:254px;width:396px;height:2px;background:#217346;"></div>
<div style="left:105px;top:237px;width:1px;height:19px;background:#bfbfbf;"></div>
<span style="left:61.01px;top:240.84px;font-size:12px;line-height:12px;color:#262626;">A</span>
<div style="left:500px;top:237px;width:1px;height:19px;background:#bfbfbf;"></div>
<span style="left:298.33px;top:240.84px;font-size:12px;line-height:12px;color:#217346;">B</span>
<div style="left:581px;top:237px;width:1px;height:19px;background:#bfbfbf;"></div>
<span style="left:536.09px;top:240.84px;font-size:12px;line-height:12px;color:#262626;">C</span>
<div style="left:638px;top:237px;width:1px;height:19px;background:#bfbfbf;"></div>
<span style="left:604.97px;top:240.84px;font-size:12px;line-height:12px;color:#262626;">D</span>
<div style="left:695px;top:237px;width:1px;height:19px;background:#bfbfbf;"></div>
<span style="left:662.27px;top:240.84px;font-size:12px;line-height:12px;color:#262626;">E</span>
<div style="left:752px;top:237px;width:1px;height:19px;background:#bfbfbf;"></div>
<span style="left:719.60px;top:240.84px;font-size:12px;line-height:12px;color:#262626;">F</span>
<div style="left:816px;top:237px;width:1px;height:19px;background:#bfbfbf;"></div>
<span style="left:779.47px;top:240.84px;font-size:12px;line-height:12px;color:#262626;">G</span>
<div style="left:896px;top:237px;width:1px;height:19px;background:#bfbfbf;"></div>
<span style="left:851.68px;top:240.84px;font-size:12px;line-height:12px;color:#262626;">H</span>
<div style="left:976px;top:237px;width:1px;height:19px;background:#bfbfbf;"></div>
<span style="left:934.35px;top:240.84px;font-size:12px;line-height:12px;color:#262626;">I</span>
<div style="left:1056px;top:237px;width:1px;height:19px;background:#bfbfbf;"></div>
<span style="left:1013.36px;top:240.84px;font-size:12px;line-height:12px;color:#262626;">J</span>
<div style="left:1136px;top:237px;width:1px;height:19px;background:#bfbfbf;"></div>
<span style="left:1091.59px;top:240.84px;font-size:12px;line-height:12px;color:#262626;">K</span>
<div style="left:1216px;top:237px;width:1px;height:19px;background:#bfbfbf;"></div>
<span style="left:1172.37px;top:240.84px;font-size:12px;line-height:12px;color:#262626;">L</span>
<div style="left:1296px;top:237px;width:1px;height:19px;background:#bfbfbf;"></div>
<span style="left:1251.02px;top:240.84px;font-size:12px;line-height:12px;color:#262626;">M</span>
<span style="left:1331.68px;top:240.84px;font-size:12px;line-height:12px;color:#262626;">N</span>
<div style="left:0px;top:276px;width:25px;height:1px;background:#bfbfbf;"></div>
<span style="left:8.99px;top:261.84px;font-size:12px;line-height:12px;color:#262626;">1</span>
<div style="left:0px;top:296px;width:25px;height:1px;background:#bfbfbf;"></div>
<span style="left:9.17px;top:281.84px;font-size:12px;line-height:12px;color:#262626;">2</span>
<div style="left:0px;top:317px;width:25px;height:1px;background:#bfbfbf;"></div>
<span style="left:9.17px;top:302.84px;font-size:12px;line-height:12px;color:#262626;">3</span>
<div style="left:0px;top:337px;width:25px;height:1px;background:#bfbfbf;"></div>
<span style="left:9.23px;top:322.84px;font-size:12px;line-height:12px;color:#262626;">4</span>
<div style="left:0px;top:357px;width:25px;height:1px;background:#bfbfbf;"></div>
<span style="left:9.17px;top:342.84px;font-size:12px;line-height:12px;color:#262626;">5</span>
<div style="left:0px;top:390px;width:25px;height:1px;background:#bfbfbf;"></div>
<span style="left:9.11px;top:375.84px;font-size:12px;line-height:12px;color:#262626;">6</span>
<div style="left:0px;top:410px;width:25px;height:1px;background:#bfbfbf;"></div>
<span style="left:9.17px;top:395.84px;font-size:12px;line-height:12px;color:#262626;">7</span>
<div style="left:0px;top:430px;width:25px;height:1px;background:#bfbfbf;"></div>
<span style="left:9.14px;top:415.84px;font-size:12px;line-height:12px;color:#262626;">8</span>
<div style="left:0px;top:450px;width:25px;height:1px;background:#bfbfbf;"></div>
<span style="left:9.17px;top:435.84px;font-size:12px;line-height:12px;color:#262626;">9</span>
<div style="left:0px;top:470px;width:25px;height:1px;background:#bfbfbf;"></div>
<span style="left:7.09px;top:455.84px;font-size:12px;line-height:12px;color:#262626;transform:scaleX(0.9000);transform-origin:0 0;">10</span>
<div style="left:0px;top:490px;width:25px;height:1px;background:#bfbfbf;"></div>
<span style="left:7.55px;top:475.84px;font-size:12px;line-height:12px;color:#262626;transform:scaleX(0.9000);transform-origin:0 0;">11</span>
<div style="left:0px;top:510px;width:25px;height:1px;background:#bfbfbf;"></div>
<span style="left:7.17px;top:495.84px;font-size:12px;line-height:12px;color:#262626;transform:scaleX(0.9000);transform-origin:0 0;">12</span>
<div style="left:0px;top:531px;width:25px;height:1px;background:#bfbfbf;"></div>
<span style="left:7.12px;top:516.84px;font-size:12px;line-height:12px;color:#262626;transform:scaleX(0.9000);transform-origin:0 0;">13</span>
<div style="left:0px;top:552px;width:25px;height:1px;background:#bfbfbf;"></div>
<span style="left:7.06px;top:537.84px;font-size:12px;line-height:12px;color:#262626;transform:scaleX(0.9000);transform-origin:0 0;">14</span>
<div style="left:0px;top:573px;width:25px;height:1px;background:#bfbfbf;"></div>
<div style="left:0px;top:553px;width:24px;height:21px;background:#d2d2d2;"></div>
<div style="left:24px;top:552px;width:2px;height:22px;background:#217346;"></div>
<span style="left:7.12px;top:558.84px;font-size:12px;line-height:12px;color:#217346;transform:scaleX(0.9000);transform-origin:0 0;">15</span>
<div style="left:0px;top:594px;width:25px;height:1px;background:#bfbfbf;"></div>
<span style="left:7.12px;top:579.84px;font-size:12px;line-height:12px;color:#262626;transform:scaleX(0.9000);transform-origin:0 0;">16</span>
<div style="left:0px;top:615px;width:25px;height:1px;background:#bfbfbf;"></div>
<span style="left:7.17px;top:600.84px;font-size:12px;line-height:12px;color:#262626;transform:scaleX(0.9000);transform-origin:0 0;">17</span>
<div style="left:0px;top:635px;width:25px;height:1px;background:#bfbfbf;"></div>
<span style="left:7.12px;top:620.84px;font-size:12px;line-height:12px;color:#262626;transform:scaleX(0.9000);transform-origin:0 0;">18</span>
<div style="left:0px;top:655px;width:25px;height:1px;background:#bfbfbf;"></div>
<span style="left:7.14px;top:640.84px;font-size:12px;line-height:12px;color:#262626;transform:scaleX(0.9000);transform-origin:0 0;">19</span>
<div style="left:0px;top:675px;width:25px;height:1px;background:#bfbfbf;"></div>
<span style="left:7.23px;top:660.84px;font-size:12px;line-height:12px;color:#262626;transform:scaleX(0.9000);transform-origin:0 0;">20</span>
<div style="left:26px;top:277px;width:870px;height:19px;background:#fce4d6;"></div>
<div style="left:26px;top:338px;width:79px;height:19px;background:#fce4d6;"></div>
<div style="left:26px;top:358px;width:870px;height:32px;background:#fce4d6;"></div>
<div style="left:26px;top:391px;width:79px;height:19px;background:#ffff00;"></div>
<div style="left:26px;top:411px;width:79px;height:19px;background:#ffff00;"></div>
<div style="left:26px;top:431px;width:79px;height:19px;background:#ffff00;"></div>
<div style="left:25px;top:276px;width:872px;height:1px;background:#000;"></div>
<div style="left:25px;top:296px;width:872px;height:1px;background:#000;"></div>
<div style="left:25px;top:317px;width:872px;height:1px;background:#000;"></div>
<div style="left:25px;top:337px;width:872px;height:1px;background:#000;"></div>
<div style="left:25px;top:357px;width:872px;height:1px;background:#000;"></div>
<div style="left:25px;top:390px;width:872px;height:1px;background:#000;"></div>
<div style="left:25px;top:410px;width:872px;height:1px;background:#000;"></div>
<div style="left:25px;top:430px;width:872px;height:1px;background:#000;"></div>
<div style="left:25px;top:450px;width:872px;height:1px;background:#000;"></div>
<div style="left:25px;top:470px;width:872px;height:1px;background:#000;"></div>
<div style="left:25px;top:490px;width:872px;height:1px;background:#000;"></div>
<div style="left:25px;top:510px;width:872px;height:1px;background:#000;"></div>
<div style="left:25px;top:531px;width:872px;height:1px;background:#000;"></div>
<div style="left:25px;top:552px;width:872px;height:1px;background:#000;"></div>
<div style="left:25px;top:573px;width:872px;height:1px;background:#000;"></div>
<div style="left:25px;top:594px;width:872px;height:1px;background:#000;"></div>
<div style="left:25px;top:615px;width:872px;height:1px;background:#000;"></div>
<div style="left:25px;top:635px;width:872px;height:1px;background:#000;"></div>
<div style="left:25px;top:655px;width:872px;height:1px;background:#000;"></div>
<div style="left:25px;top:675px;width:872px;height:1px;background:#000;"></div>
<div style="left:105px;top:276px;width:1px;height:403px;background:#000;"></div>
<div style="left:500px;top:357px;width:1px;height:322px;background:#000;"></div>
<div style="left:581px;top:357px;width:1px;height:322px;background:#000;"></div>
<div style="left:638px;top:357px;width:1px;height:322px;background:#000;"></div>
<div style="left:695px;top:357px;width:1px;height:322px;background:#000;"></div>
<div style="left:752px;top:357px;width:1px;height:322px;background:#000;"></div>
<div style="left:816px;top:357px;width:1px;height:322px;background:#000;"></div>
<div style="left:896px;top:276px;width:1px;height:403px;background:#000;"></div>
<div style="left:105px;top:277px;width:1px;height:19px;background:#fce4d6;"></div>
<div style="left:816px;top:318px;width:1px;height:19px;background:#d4d4d4;"></div>
<div style="left:104px;top:551px;width:398px;height:2px;background:#217346;"></div>
<div style="left:104px;top:573px;width:393px;height:2px;background:#217346;"></div>
<div style="left:104px;top:551px;width:2px;height:24px;background:#217346;"></div>
<div style="left:500px;top:551px;width:2px;height:19px;background:#217346;"></div>
<div style="left:497px;top:570px;width:7px;height:1px;background:#fff;"></div>
<div style="left:497px;top:570px;width:1px;height:7px;background:#fff;"></div>
<div style="left:498px;top:571px;width:5px;height:5px;background:#217346;"></div>
<span style="left:373.90px;top:279.30px;font-size:15px;line-height:15px;color:#000;font-weight:700;">GASTOS DE INVERSION</span>
<span style="left:35.06px;top:300.24px;font-size:12px;line-height:12px;color:#000;font-weight:700;transform:scaleX(0.8162);transform-origin:0 0;">PROGRAMA</span>
<span style="left:108.13px;top:300.30px;font-size:15px;line-height:15px;color:#000;transform:scaleX(0.8963);transform-origin:0 0;">Valle Hermoso participativo y transparente</span>
<span style="left:44.40px;top:319.84px;font-size:12px;line-height:12px;color:#000;font-weight:700;transform:scaleX(0.8376);transform-origin:0 0;">Objetivo</span>
<span style="left:107.59px;top:320.30px;font-size:15px;line-height:15px;color:#000;transform:scaleX(0.9694);transform-origin:0 0;">Planificar el desarrollo de la Parroquia con Participación Ciudadna activa y la coordinación Institucional.</span>
<span style="left:33.06px;top:341.74px;font-size:12px;line-height:12px;color:#000;font-weight:700;transform:scaleX(0.9435);transform-origin:0 0;">PROYECTO</span>
<span style="left:108.33px;top:339.90px;font-size:15px;line-height:15px;color:#000;font-weight:700;">PROYECTO DE SERVICIOS GENERALES</span>
<span style="left:31.94px;top:366.74px;font-size:14px;line-height:14px;color:#000;font-weight:700;transform:scaleX(1.0514);transform-origin:0 0;">PARTIDA</span>
<span style="left:243.72px;top:366.54px;font-size:14px;line-height:14px;color:#000;font-weight:700;transform:scaleX(1.0774);transform-origin:0 0;">DENOMINACIÓN</span>
<span style="left:507.64px;top:357.94px;font-size:14px;line-height:14px;color:#000;font-weight:700;transform:scaleX(1.0215);transform-origin:0 0;">ASIGNAD</span>
<span style="left:533.25px;top:378.14px;font-size:14px;line-height:14px;color:#000;font-weight:700;transform:scaleX(1.3361);transform-origin:0 0;">O</span>
<span style="left:588.51px;top:357.94px;font-size:14px;line-height:14px;color:#000;font-weight:700;transform:scaleX(1.0835);transform-origin:0 0;">REFO</span>
<span style="left:587.44px;top:378.14px;font-size:14px;line-height:14px;color:#000;font-weight:700;transform:scaleX(1.0578);transform-origin:0 0;">RMAD</span>
<span style="left:646.01px;top:357.94px;font-size:14px;line-height:14px;color:#000;font-weight:700;transform:scaleX(1.0856);transform-origin:0 0;">DISMI</span>
<span style="left:641.51px;top:378.14px;font-size:14px;line-height:14px;color:#000;font-weight:700;transform:scaleX(1.0869);transform-origin:0 0;">NUCIO</span>
<span style="left:699.82px;top:357.94px;font-size:14px;line-height:14px;color:#000;font-weight:700;transform:scaleX(1.0821);transform-origin:0 0;">INCRE</span>
<span style="left:701.69px;top:378.14px;font-size:14px;line-height:14px;color:#000;font-weight:700;transform:scaleX(1.1045);transform-origin:0 0;">MENT</span>
<span style="left:758.10px;top:357.94px;font-size:14px;line-height:14px;color:#000;font-weight:700;transform:scaleX(1.0626);transform-origin:0 0;">GASTO</span>
<span style="left:779.88px;top:378.14px;font-size:14px;line-height:14px;color:#000;font-weight:700;transform:scaleX(1.0119);transform-origin:0 0;">S</span>
<span style="left:826.27px;top:366.74px;font-size:14px;line-height:14px;color:#000;font-weight:700;transform:scaleX(1.0348);transform-origin:0 0;">SALDOS</span>
<span style="left:37.29px;top:394.07px;font-size:14.67px;line-height:14.67px;color:#2a2a2a;transform:scaleX(0.9687);transform-origin:0 0;">71.01.05</span>
<span style="left:107.84px;top:394.07px;font-size:14.67px;line-height:14.67px;color:#2a2a2a;transform:scaleX(0.9918);transform-origin:0 0;">Remuneraciones Unificadas(AUXILIAR SECRETARIA)</span>
<span style="left:523.49px;top:394.07px;font-size:14.67px;line-height:14.67px;color:#2a2a2a;transform:scaleX(0.9674);transform-origin:0 0;">7,440.00</span>
<span style="left:608.13px;top:394.07px;font-size:14.67px;line-height:14.67px;color:#2a2a2a;transform:scaleX(0.9660);transform-origin:0 0;">0.00</span>
<span style="left:665.03px;top:394.07px;font-size:14.67px;line-height:14.67px;color:#2a2a2a;transform:scaleX(0.9660);transform-origin:0 0;">0.00</span>
<span style="left:722.03px;top:394.07px;font-size:14.67px;line-height:14.67px;color:#2a2a2a;transform:scaleX(0.9660);transform-origin:0 0;">0.00</span>
<span style="left:786.03px;top:394.07px;font-size:14.67px;line-height:14.67px;color:#2a2a2a;transform:scaleX(0.9660);transform-origin:0 0;">0.00</span>
<span style="left:838.29px;top:394.07px;font-size:14.67px;line-height:14.67px;color:#2a2a2a;transform:scaleX(0.9674);transform-origin:0 0;">7,440.00</span>
<span style="left:37.29px;top:414.07px;font-size:14.67px;line-height:14.67px;color:#2a2a2a;transform:scaleX(0.9687);transform-origin:0 0;">71.01.05</span>
<span style="left:107.84px;top:414.07px;font-size:14.67px;line-height:14.67px;color:#2a2a2a;transform:scaleX(0.9865);transform-origin:0 0;">Remuneraciones Unificadas(AUXILIAR CONTABILIDAD)</span>
<span style="left:523.49px;top:414.07px;font-size:14.67px;line-height:14.67px;color:#2a2a2a;transform:scaleX(0.9674);transform-origin:0 0;">7,200.00</span>
<span style="left:608.13px;top:414.07px;font-size:14.67px;line-height:14.67px;color:#2a2a2a;transform:scaleX(0.9660);transform-origin:0 0;">0.00</span>
<span style="left:665.03px;top:414.07px;font-size:14.67px;line-height:14.67px;color:#2a2a2a;transform:scaleX(0.9660);transform-origin:0 0;">0.00</span>
<span style="left:722.03px;top:414.07px;font-size:14.67px;line-height:14.67px;color:#2a2a2a;transform:scaleX(0.9660);transform-origin:0 0;">0.00</span>
<span style="left:786.03px;top:414.07px;font-size:14.67px;line-height:14.67px;color:#2a2a2a;transform:scaleX(0.9660);transform-origin:0 0;">0.00</span>
<span style="left:838.29px;top:414.07px;font-size:14.67px;line-height:14.67px;color:#2a2a2a;transform:scaleX(0.9674);transform-origin:0 0;">7,200.00</span>
<span style="left:37.29px;top:434.07px;font-size:14.67px;line-height:14.67px;color:#2a2a2a;transform:scaleX(0.9687);transform-origin:0 0;">71.01.05</span>
<span style="left:107.84px;top:434.07px;font-size:14.67px;line-height:14.67px;color:#2a2a2a;transform:scaleX(0.9889);transform-origin:0 0;">Remuneraciones Unificadas(AUXILIAR DE SERVICIOS)</span>
<span style="left:523.63px;top:434.07px;font-size:14.67px;line-height:14.67px;color:#2a2a2a;transform:scaleX(0.9649);transform-origin:0 0;">5,400.00</span>
<span style="left:608.13px;top:434.07px;font-size:14.67px;line-height:14.67px;color:#2a2a2a;transform:scaleX(0.9660);transform-origin:0 0;">0.00</span>
<span style="left:665.03px;top:434.07px;font-size:14.67px;line-height:14.67px;color:#2a2a2a;transform:scaleX(0.9660);transform-origin:0 0;">0.00</span>
<span style="left:722.03px;top:434.07px;font-size:14.67px;line-height:14.67px;color:#2a2a2a;transform:scaleX(0.9660);transform-origin:0 0;">0.00</span>
<span style="left:786.03px;top:434.07px;font-size:14.67px;line-height:14.67px;color:#2a2a2a;transform:scaleX(0.9660);transform-origin:0 0;">0.00</span>
<span style="left:838.43px;top:434.07px;font-size:14.67px;line-height:14.67px;color:#2a2a2a;transform:scaleX(0.9649);transform-origin:0 0;">5,400.00</span>
<span style="left:37.29px;top:454.07px;font-size:14.67px;line-height:14.67px;color:#2a2a2a;transform:scaleX(0.9687);transform-origin:0 0;">71.02.03</span>
<span style="left:107.80px;top:454.07px;font-size:14.67px;line-height:14.67px;color:#2a2a2a;transform:scaleX(1.0211);transform-origin:0 0;">Decimo Tercer Sueldo</span>
<span style="left:523.13px;top:454.07px;font-size:14.67px;line-height:14.67px;color:#2a2a2a;transform:scaleX(0.9738);transform-origin:0 0;">1,670.00</span>
<span style="left:608.13px;top:454.07px;font-size:14.67px;line-height:14.67px;color:#2a2a2a;transform:scaleX(0.9660);transform-origin:0 0;">0.00</span>
<span style="left:665.03px;top:454.07px;font-size:14.67px;line-height:14.67px;color:#2a2a2a;transform:scaleX(0.9660);transform-origin:0 0;">0.00</span>
<span style="left:722.03px;top:454.07px;font-size:14.67px;line-height:14.67px;color:#2a2a2a;transform:scaleX(0.9660);transform-origin:0 0;">0.00</span>
<span style="left:786.03px;top:454.07px;font-size:14.67px;line-height:14.67px;color:#2a2a2a;transform:scaleX(0.9660);transform-origin:0 0;">0.00</span>
<span style="left:837.93px;top:454.07px;font-size:14.67px;line-height:14.67px;color:#2a2a2a;transform:scaleX(0.9738);transform-origin:0 0;">1,670.00</span>
<span style="left:37.29px;top:474.07px;font-size:14.67px;line-height:14.67px;color:#2a2a2a;transform:scaleX(0.9661);transform-origin:0 0;">71.02.04</span>
<span style="left:107.82px;top:474.07px;font-size:14.67px;line-height:14.67px;color:#2a2a2a;transform:scaleX(1.0040);transform-origin:0 0;">Decimo Cuarto Sueldo</span>
<span style="left:523.13px;top:474.07px;font-size:14.67px;line-height:14.67px;color:#2a2a2a;transform:scaleX(0.9738);transform-origin:0 0;">1,350.00</span>
<span style="left:608.13px;top:474.07px;font-size:14.67px;line-height:14.67px;color:#2a2a2a;transform:scaleX(0.9660);transform-origin:0 0;">0.00</span>
<span style="left:665.03px;top:474.07px;font-size:14.67px;line-height:14.67px;color:#2a2a2a;transform:scaleX(0.9660);transform-origin:0 0;">0.00</span>
<span style="left:722.03px;top:474.07px;font-size:14.67px;line-height:14.67px;color:#2a2a2a;transform:scaleX(0.9660);transform-origin:0 0;">0.00</span>
<span style="left:786.03px;top:474.07px;font-size:14.67px;line-height:14.67px;color:#2a2a2a;transform:scaleX(0.9660);transform-origin:0 0;">0.00</span>
<span style="left:837.93px;top:474.07px;font-size:14.67px;line-height:14.67px;color:#2a2a2a;transform:scaleX(0.9738);transform-origin:0 0;">1,350.00</span>
<span style="left:37.29px;top:494.07px;font-size:14.67px;line-height:14.67px;color:#2a2a2a;transform:scaleX(0.9700);transform-origin:0 0;">71.06.01</span>
<span style="left:109.00px;top:494.07px;font-size:14.67px;line-height:14.67px;color:#2a2a2a;transform:scaleX(0.9769);transform-origin:0 0;">Aporte Patronal</span>
<span style="left:523.49px;top:494.07px;font-size:14.67px;line-height:14.67px;color:#2a2a2a;transform:scaleX(0.9687);transform-origin:0 0;">2,234.16</span>
<span style="left:608.13px;top:494.07px;font-size:14.67px;line-height:14.67px;color:#2a2a2a;transform:scaleX(0.9660);transform-origin:0 0;">0.00</span>
<span style="left:665.03px;top:494.07px;font-size:14.67px;line-height:14.67px;color:#2a2a2a;transform:scaleX(0.9660);transform-origin:0 0;">0.00</span>
<span style="left:722.03px;top:494.07px;font-size:14.67px;line-height:14.67px;color:#2a2a2a;transform:scaleX(0.9660);transform-origin:0 0;">0.00</span>
<span style="left:786.03px;top:494.07px;font-size:14.67px;line-height:14.67px;color:#2a2a2a;transform:scaleX(0.9660);transform-origin:0 0;">0.00</span>
<span style="left:838.29px;top:494.07px;font-size:14.67px;line-height:14.67px;color:#2a2a2a;transform:scaleX(0.9687);transform-origin:0 0;">2,234.16</span>
<span style="left:39.34px;top:515.07px;font-size:14.67px;line-height:14.67px;color:#2a2a2a;transform:scaleX(0.8993);transform-origin:0 0;">71.06.02</span>
<span style="left:107.90px;top:515.07px;font-size:14.67px;line-height:14.67px;color:#2a2a2a;transform:scaleX(0.9344);transform-origin:0 0;">Fondos de Reserva</span>
<span style="left:523.13px;top:515.07px;font-size:14.67px;line-height:14.67px;color:#2a2a2a;transform:scaleX(0.9751);transform-origin:0 0;">1,049.58</span>
<span style="left:608.13px;top:515.07px;font-size:14.67px;line-height:14.67px;color:#2a2a2a;transform:scaleX(0.9660);transform-origin:0 0;">0.00</span>
<span style="left:665.03px;top:515.07px;font-size:14.67px;line-height:14.67px;color:#2a2a2a;transform:scaleX(0.9660);transform-origin:0 0;">0.00</span>
<span style="left:722.03px;top:515.07px;font-size:14.67px;line-height:14.67px;color:#2a2a2a;transform:scaleX(0.9660);transform-origin:0 0;">0.00</span>
<span style="left:786.03px;top:515.07px;font-size:14.67px;line-height:14.67px;color:#2a2a2a;transform:scaleX(0.9660);transform-origin:0 0;">0.00</span>
<span style="left:837.93px;top:515.07px;font-size:14.67px;line-height:14.67px;color:#2a2a2a;transform:scaleX(0.9751);transform-origin:0 0;">1,049.58</span>
<span style="left:39.34px;top:536.07px;font-size:14.67px;line-height:14.67px;color:#2a2a2a;transform:scaleX(0.8969);transform-origin:0 0;">71.06.06</span>
<span style="left:107.95px;top:536.07px;font-size:14.67px;line-height:14.67px;color:#2a2a2a;transform:scaleX(0.8927);transform-origin:0 0;">Honorarios por contrato(TECNICA PROYECTOS)</span>
<span style="left:527.98px;top:536.07px;font-size:14.67px;line-height:14.67px;color:#2a2a2a;transform:scaleX(0.8880);transform-origin:0 0;">5,400.00</span>
<span style="left:608.13px;top:536.07px;font-size:14.67px;line-height:14.67px;color:#2a2a2a;transform:scaleX(0.9660);transform-origin:0 0;">0.00</span>
<span style="left:665.03px;top:536.07px;font-size:14.67px;line-height:14.67px;color:#2a2a2a;transform:scaleX(0.9660);transform-origin:0 0;">0.00</span>
<span style="left:722.03px;top:536.07px;font-size:14.67px;line-height:14.67px;color:#2a2a2a;transform:scaleX(0.9660);transform-origin:0 0;">0.00</span>
<span style="left:786.03px;top:536.07px;font-size:14.67px;line-height:14.67px;color:#2a2a2a;transform:scaleX(0.9660);transform-origin:0 0;">0.00</span>
<span style="left:838.43px;top:536.07px;font-size:14.67px;line-height:14.67px;color:#2a2a2a;transform:scaleX(0.9649);transform-origin:0 0;">5,400.00</span>
<span style="left:39.34px;top:557.07px;font-size:14.67px;line-height:14.67px;color:#2a2a2a;transform:scaleX(0.8993);transform-origin:0 0;">71.06.07</span>
<span style="left:108.40px;top:557.07px;font-size:14.67px;line-height:14.67px;color:#2a2a2a;transform:scaleX(0.9066);transform-origin:0 0;">Servicios Personales por Contrato(MAESTRO ALBAÑIL)</span>
<span style="left:527.85px;top:557.07px;font-size:14.67px;line-height:14.67px;color:#2a2a2a;transform:scaleX(0.8904);transform-origin:0 0;">6,000.00</span>
<span style="left:608.13px;top:557.07px;font-size:14.67px;line-height:14.67px;color:#2a2a2a;transform:scaleX(0.9660);transform-origin:0 0;">0.00</span>
<span style="left:665.03px;top:557.07px;font-size:14.67px;line-height:14.67px;color:#2a2a2a;transform:scaleX(0.9660);transform-origin:0 0;">0.00</span>
<span style="left:722.03px;top:557.07px;font-size:14.67px;line-height:14.67px;color:#2a2a2a;transform:scaleX(0.9660);transform-origin:0 0;">0.00</span>
<span style="left:786.03px;top:557.07px;font-size:14.67px;line-height:14.67px;color:#2a2a2a;transform:scaleX(0.9660);transform-origin:0 0;">0.00</span>
<span style="left:838.29px;top:557.07px;font-size:14.67px;line-height:14.67px;color:#2a2a2a;transform:scaleX(0.9674);transform-origin:0 0;">6,000.00</span>
<span style="left:39.34px;top:578.07px;font-size:14.67px;line-height:14.67px;color:#2a2a2a;transform:scaleX(0.8993);transform-origin:0 0;">71.07.07</span>
<span style="left:108.32px;top:578.07px;font-size:14.67px;line-height:14.67px;color:#2a2a2a;transform:scaleX(0.9298);transform-origin:0 0;">Compensación vaciones no gozadas</span>
<span style="left:527.51px;top:578.07px;font-size:14.67px;line-height:14.67px;color:#2a2a2a;transform:scaleX(0.8963);transform-origin:0 0;">1,000.00</span>
<span style="left:608.13px;top:578.07px;font-size:14.67px;line-height:14.67px;color:#2a2a2a;transform:scaleX(0.9660);transform-origin:0 0;">0.00</span>
<span style="left:665.03px;top:578.07px;font-size:14.67px;line-height:14.67px;color:#2a2a2a;transform:scaleX(0.9660);transform-origin:0 0;">0.00</span>
<span style="left:722.03px;top:578.07px;font-size:14.67px;line-height:14.67px;color:#2a2a2a;transform:scaleX(0.9660);transform-origin:0 0;">0.00</span>
<span style="left:786.03px;top:578.07px;font-size:14.67px;line-height:14.67px;color:#2a2a2a;transform:scaleX(0.9660);transform-origin:0 0;">0.00</span>
<span style="left:837.93px;top:578.07px;font-size:14.67px;line-height:14.67px;color:#2a2a2a;transform:scaleX(0.9738);transform-origin:0 0;">1,000.00</span>
<span style="left:39.34px;top:599.07px;font-size:14.67px;line-height:14.67px;color:#2a2a2a;transform:scaleX(0.8993);transform-origin:0 0;">73.06.12</span>
<span style="left:108.32px;top:599.07px;font-size:14.67px;line-height:14.67px;color:#2a2a2a;transform:scaleX(0.9272);transform-origin:0 0;">Capacitación servidores publicos</span>
<span style="left:527.85px;top:599.07px;font-size:14.67px;line-height:14.67px;color:#2a2a2a;transform:scaleX(0.8904);transform-origin:0 0;">2,700.00</span>
<span style="left:608.13px;top:599.07px;font-size:14.67px;line-height:14.67px;color:#2a2a2a;transform:scaleX(0.9660);transform-origin:0 0;">0.00</span>
<span style="left:665.03px;top:599.07px;font-size:14.67px;line-height:14.67px;color:#2a2a2a;transform:scaleX(0.9660);transform-origin:0 0;">0.00</span>
<span style="left:722.03px;top:599.07px;font-size:14.67px;line-height:14.67px;color:#2a2a2a;transform:scaleX(0.9660);transform-origin:0 0;">0.00</span>
<span style="left:786.03px;top:599.07px;font-size:14.67px;line-height:14.67px;color:#2a2a2a;transform:scaleX(0.9660);transform-origin:0 0;">0.00</span>
<span style="left:838.29px;top:599.07px;font-size:14.67px;line-height:14.67px;color:#2a2a2a;transform:scaleX(0.9674);transform-origin:0 0;">2,700.00</span>
<span style="left:37.29px;top:619.07px;font-size:14.67px;line-height:14.67px;color:#2a2a2a;transform:scaleX(0.9661);transform-origin:0 0;">73.01.04</span>
<span style="left:107.84px;top:619.07px;font-size:14.67px;line-height:14.67px;color:#2a2a2a;transform:scaleX(0.9924);transform-origin:0 0;">Energía Eléctrica</span>
<span style="left:523.63px;top:619.07px;font-size:14.67px;line-height:14.67px;color:#2a2a2a;transform:scaleX(0.9649);transform-origin:0 0;">3,000.00</span>
<span style="left:608.13px;top:619.07px;font-size:14.67px;line-height:14.67px;color:#2a2a2a;transform:scaleX(0.9660);transform-origin:0 0;">0.00</span>
<span style="left:665.03px;top:619.07px;font-size:14.67px;line-height:14.67px;color:#2a2a2a;transform:scaleX(0.9660);transform-origin:0 0;">0.00</span>
<span style="left:722.03px;top:619.07px;font-size:14.67px;line-height:14.67px;color:#2a2a2a;transform:scaleX(0.9660);transform-origin:0 0;">0.00</span>
<span style="left:786.03px;top:619.07px;font-size:14.67px;line-height:14.67px;color:#2a2a2a;transform:scaleX(0.9660);transform-origin:0 0;">0.00</span>
<span style="left:838.43px;top:619.07px;font-size:14.67px;line-height:14.67px;color:#2a2a2a;transform:scaleX(0.9649);transform-origin:0 0;">3,000.00</span>
<span style="left:37.29px;top:639.07px;font-size:14.67px;line-height:14.67px;color:#2a2a2a;transform:scaleX(0.9687);transform-origin:0 0;">73.01.05</span>
<span style="left:108.70px;top:639.07px;font-size:14.67px;line-height:14.67px;color:#2a2a2a;transform:scaleX(1.0130);transform-origin:0 0;">Telecomunicaciones</span>
<span style="left:523.49px;top:639.07px;font-size:14.67px;line-height:14.67px;color:#2a2a2a;transform:scaleX(0.9674);transform-origin:0 0;">2,640.00</span>
<span style="left:608.13px;top:639.07px;font-size:14.67px;line-height:14.67px;color:#2a2a2a;transform:scaleX(0.9660);transform-origin:0 0;">0.00</span>
<span style="left:665.03px;top:639.07px;font-size:14.67px;line-height:14.67px;color:#2a2a2a;transform:scaleX(0.9660);transform-origin:0 0;">0.00</span>
<span style="left:722.03px;top:639.07px;font-size:14.67px;line-height:14.67px;color:#2a2a2a;transform:scaleX(0.9660);transform-origin:0 0;">0.00</span>
<span style="left:786.03px;top:639.07px;font-size:14.67px;line-height:14.67px;color:#2a2a2a;transform:scaleX(0.9660);transform-origin:0 0;">0.00</span>
<span style="left:838.29px;top:639.07px;font-size:14.67px;line-height:14.67px;color:#2a2a2a;transform:scaleX(0.9674);transform-origin:0 0;">2,640.00</span>
<span style="left:37.29px;top:659.07px;font-size:14.67px;line-height:14.67px;color:#2a2a2a;transform:scaleX(0.9712);transform-origin:0 0;">73.04.02</span>
<span style="left:107.83px;top:659.07px;font-size:14.67px;line-height:14.67px;color:#2a2a2a;">Edificios, Locales y Residencias(Mantenimiento)</span>
<span style="left:523.63px;top:659.07px;font-size:14.67px;line-height:14.67px;color:#2a2a2a;transform:scaleX(0.9649);transform-origin:0 0;">3,000.00</span>
<span style="left:608.13px;top:659.07px;font-size:14.67px;line-height:14.67px;color:#2a2a2a;transform:scaleX(0.9660);transform-origin:0 0;">0.00</span>
<span style="left:665.03px;top:659.07px;font-size:14.67px;line-height:14.67px;color:#2a2a2a;transform:scaleX(0.9660);transform-origin:0 0;">0.00</span>
<span style="left:722.03px;top:659.07px;font-size:14.67px;line-height:14.67px;color:#2a2a2a;transform:scaleX(0.9660);transform-origin:0 0;">0.00</span>
<span style="left:786.03px;top:659.07px;font-size:14.67px;line-height:14.67px;color:#2a2a2a;transform:scaleX(0.9660);transform-origin:0 0;">0.00</span>
<span style="left:838.43px;top:659.07px;font-size:14.67px;line-height:14.67px;color:#2a2a2a;transform:scaleX(0.9649);transform-origin:0 0;">3,000.00</span>
<span style="left:917.37px;top:396.68px;font-size:11px;line-height:11px;color:#2a2a2a;transform:scaleX(1.1455);transform-origin:0 0;">20,040.00</span>
<div style="left:1338px;top:237px;width:22px;height:441px;background:#e6e6e6;"></div>
<div style="left:1338px;top:256px;width:1px;height:422px;background:#ababab;"></div>
<div style="left:1342px;top:239px;width:15px;height:15px;background:#fff;box-sizing:border-box;border:1px solid #ababab;"></div>
<svg style="left:1345px;top:244px;" width="9" height="5" viewBox="0 0 9 5"><path d="M0 5 L4.5 0 L9 5 Z" fill="#262626"/></svg>
<div style="left:1342px;top:254px;width:15px;height:215px;background:#fff;box-sizing:border-box;border:1px solid #ababab;"></div>
<div style="left:1342px;top:664px;width:15px;height:15px;background:#fff;box-sizing:border-box;border:1px solid #ababab;"></div>
<svg style="left:1345px;top:669px;" width="9" height="5" viewBox="0 0 9 5"><path d="M0 0 L4.5 5 L9 0 Z" fill="#262626"/></svg>
<div style="left:0px;top:678px;width:1360px;height:28px;background:#e6e6e6;"></div>
<div style="left:0px;top:678px;width:1338px;height:1px;background:#c6c6c6;"></div>
<svg style="left:26.5px;top:687.5px;" width="5" height="8" viewBox="0 0 5 8"><path d="M5 0 V8 L0 4 Z" fill="#c0c0c0"/></svg>
<svg style="left:56px;top:687.5px;" width="5" height="8" viewBox="0 0 5 8"><path d="M0 0 V8 L5 4 Z" fill="#217346"/></svg>
<div style="left:100px;top:686px;width:1px;height:17px;background:#b8b8b8;"></div>
<span style="left:111.14px;top:685.91px;font-size:12.5px;line-height:12.5px;color:#444;transform:scaleX(1.0627);transform-origin:0 0;">poa 2023</span>
<div style="left:179px;top:686px;width:1px;height:17px;background:#b8b8b8;"></div>
<span style="left:196.06px;top:685.91px;font-size:12.5px;line-height:12.5px;color:#444;transform:scaleX(0.9372);transform-origin:0 0;">PRESUPUESTO CORRIENTE 2023</span>
<div style="left:401px;top:678px;width:246px;height:24px;background:#fff;"></div>
<div style="left:401px;top:678px;width:1px;height:24px;background:#c6c6c6;"></div>
<div style="left:646px;top:678px;width:1px;height:24px;background:#c6c6c6;"></div>
<div style="left:401px;top:700px;width:246px;height:2px;background:#217346;"></div>
<span style="left:412.18px;top:685.91px;font-size:12.5px;line-height:12.5px;color:#217346;font-weight:700;transform:scaleX(1.0080);transform-origin:0 0;">FORTALECIMIENTO INSTITUCIONAL</span>
<span style="left:661.25px;top:685.91px;font-size:12.5px;line-height:12.5px;color:#444;">ADULTO MAYOR</span>
<div style="left:774px;top:686px;width:1px;height:17px;background:#b8b8b8;"></div>
<span style="left:787.06px;top:685.91px;font-size:12.5px;line-height:12.5px;color:#444;transform:scaleX(0.9390);transform-origin:0 0;">PERSONAS DISC MIES</span>
<div style="left:931px;top:686px;width:1px;height:17px;background:#b8b8b8;"></div>
<div style="left:934px;top:681px;width:207px;height:22px;background:#00b050;"></div>
<span style="left:947.04px;top:685.91px;font-size:12.5px;line-height:12.5px;color:#000;transform:scaleX(0.9563);transform-origin:0 0;">PRODUCTI FORTALECIMIENTO</span>
<div style="left:1143px;top:686px;width:1px;height:17px;background:#b8b8b8;"></div>
<div style="left:1146px;top:681px;width:100px;height:22px;background:#00b0f0;"></div>
<span style="left:1157.03px;top:685.91px;font-size:12.5px;line-height:12.5px;color:#000;transform:scaleX(0.9705);transform-origin:0 0;">PRODUCT TURI</span>
<div style="left:1246px;top:680px;width:8px;height:24px;background:#e6e6e6;"></div>
<span style="left:1254.07px;top:685.84px;font-size:12px;line-height:12px;color:#1e5c3a;font-weight:700;transform:scaleX(1.1905);transform-origin:0 0;">...</span>
<svg style="left:1278px;top:683px;" width="18" height="18" viewBox="0 0 18 18"><circle cx="9" cy="9" r="8" fill="none" stroke="#777" stroke-width="1.3"/><path d="M9 4.5 V13.5 M4.5 9 H13.5" stroke="#777" stroke-width="1.5"/></svg>
<div style="left:1315px;top:686px;width:2px;height:2px;background:#b0b0b0;"></div>
<div style="left:1315px;top:691px;width:2px;height:2px;background:#b0b0b0;"></div>
<div style="left:1315px;top:696px;width:2px;height:2px;background:#b0b0b0;"></div>
<svg style="left:1331px;top:683px;" width="9" height="17" viewBox="0 0 9 17"><rect x="0.5" y="0.5" width="8" height="16" fill="none" stroke="#555"/><path d="M4.5 0 V17" stroke="#555"/><path d="M5 8.5 L8 6 V11 Z" fill="#333"/></svg>
<div style="left:0px;top:706px;width:1360px;height:22px;background:#f3f3f3;"></div>
<div style="left:0px;top:706px;width:1360px;height:1px;background:#d4d4d4;"></div>
<span style="left:6.59px;top:711.84px;font-size:12px;line-height:12px;color:#333;transform:scaleX(0.9506);transform-origin:0 0;">Listo</span>
<svg style="left:49px;top:710px;" width="18" height="15" viewBox="0 0 18 15"><path d="M4 3.5 A5.5 5.5 0 1 0 8 13.5" fill="none" stroke="#666" stroke-width="1.3" stroke-dasharray="2.5 1.5"/><path d="M7.5 0.5 V7" stroke="#555" stroke-width="1.2"/><path d="M5 4.5 L7.5 7.5 L10 4.5" fill="none" stroke="#555" stroke-width="1.2"/><path d="M9.5 7.5 L16.5 14.5 M16.5 7.5 L9.5 14.5" stroke="#333" stroke-width="1.8"/></svg>
<span style="left:69.00px;top:711.84px;font-size:12px;line-height:12px;color:#262626;transform:scaleX(0.9488);transform-origin:0 0;">Accesibilidad: es necesario investigar</span>
<div style="left:1060px;top:706px;width:40px;height:22px;background:#cdcdcd;"></div>
<svg style="left:1073px;top:710px;" width="14" height="13" viewBox="0 0 14 13"><rect x="0.5" y="0.5" width="3.6" height="3.4" fill="#7a7a7a"/><rect x="5.0" y="0.5" width="3.6" height="3.4" fill="#7a7a7a"/><rect x="9.5" y="0.5" width="3.6" height="3.4" fill="#7a7a7a"/><rect x="0.5" y="4.8" width="3.6" height="3.4" fill="#7a7a7a"/><rect x="5.0" y="4.8" width="3.6" height="3.4" fill="#7a7a7a"/><rect x="9.5" y="4.8" width="3.6" height="3.4" fill="#7a7a7a"/><rect x="0.5" y="9.1" width="3.6" height="3.4" fill="#7a7a7a"/><rect x="5.0" y="9.1" width="3.6" height="3.4" fill="#7a7a7a"/><rect x="9.5" y="9.1" width="3.6" height="3.4" fill="#7a7a7a"/></svg>
<svg style="left:1112px;top:711px;" width="15" height="13" viewBox="0 0 15 13"><rect x="0.5" y="0.5" width="14" height="12" fill="none" stroke="#666"/><rect x="3.5" y="3.5" width="8" height="7" fill="none" stroke="#666"/><path d="M5 5.5 H10 M5 7.5 H10" stroke="#666"/></svg>
<svg style="left:1152px;top:711px;" width="15" height="13" viewBox="0 0 15 13"><path d="M0.5 0.5 H14.5 V12.5 H0.5 Z" fill="none" stroke="#666"/><path d="M7.5 0.5 V7.5 H14.5 M0.5 7.5 H4" fill="none" stroke="#666"/></svg>
<div style="left:1186px;top:717px;width:8px;height:1px;background:#555;"></div>
<div style="left:1199px;top:717px;width:100px;height:1px;background:#777;"></div>
<div style="left:1247px;top:712px;width:4px;height:11px;background:#555;"></div>
<div style="left:1303px;top:717px;width:9px;height:1px;background:#555;"></div>
<div style="left:1307px;top:713px;width:1px;height:9px;background:#555;"></div>
<span style="left:1324.69px;top:710.84px;font-size:12px;line-height:12px;color:#262626;transform:scaleX(0.9014);transform-origin:0 0;">100%</span>
<div style="left:0px;top:728px;width:1360px;height:40px;background:#101010;"></div>
<svg style="left:15px;top:739px;" width="17" height="17" viewBox="0 0 17 17"><path d="M0 2.4 L7 1.4 V8 H0 Z M8 1.2 L17 0 V8 H8 Z M0 9 H7 V15.6 L0 14.6 Z M8 9 H17 V17 L8 15.8 Z" fill="#fff"/></svg>
<svg style="left:64px;top:740px;" width="16" height="17" viewBox="0 0 16 17"><circle cx="10" cy="6" r="5" fill="none" stroke="#fff" stroke-width="1.4"/><line x1="6.5" y1="9.5" x2="1" y2="15.5" stroke="#fff" stroke-width="1.5"/></svg>
<svg style="left:110px;top:736px;" width="25" height="25" viewBox="0 0 25 25"><defs><linearGradient id="eg" x1="0.1" y1="0.9" x2="0.9" y2="0.2"><stop offset="0" stop-color="#0b57a0"/><stop offset="0.4" stop-color="#1a86d4"/><stop offset="0.62" stop-color="#2cb3e8"/><stop offset="0.82" stop-color="#52cd7c"/><stop offset="1" stop-color="#8be05a"/></linearGradient></defs><circle cx="12.5" cy="12.5" r="12" fill="url(#eg)"/><ellipse cx="14.8" cy="14.5" rx="3.4" ry="2.8" fill="#111"/><path d="M10.5 15.5 Q11.5 20 16 20.5 Q20.5 21 23.5 17.5" fill="none" stroke="#0d4f94" stroke-width="2.5"/></svg>
<svg style="left:160px;top:736px;" width="24" height="24" viewBox="0 0 24 24"><circle cx="12" cy="12" r="12" fill="#db4437"/><path d="M12 12 L1.6 6 A12 12 0 0 0 12 24 Z" fill="#0f9d58"/><path d="M12 12 L22.4 6 A12 12 0 0 1 12 24 Z" fill="#f4b400"/><path d="M12 6 H22.4 A12 12 0 0 0 1.6 6 L6.8 15 A6 6 0 0 1 12 6 Z" fill="#db4437"/><circle cx="12" cy="12" r="5.6" fill="#fff"/><circle cx="12" cy="12" r="4.4" fill="#4285f4"/></svg>
<svg style="left:208px;top:737px;" width="26" height="24" viewBox="0 0 26 24"><rect x="6" y="1" width="19" height="22" rx="1.5" fill="#41a5ee"/><rect x="6" y="7" width="19" height="6" fill="#2b7cd3"/><rect x="6" y="13" width="19" height="6" fill="#185abd"/><rect x="6" y="19" width="19" height="4" fill="#103f91"/><rect x="0" y="5" width="13" height="13" rx="1" fill="#185abd"/><text x="1.3" y="15.5" font-family="Liberation Sans" font-weight="700" font-size="10" fill="#fff">W</text></svg>
<svg style="left:258px;top:738px;" width="23" height="21" viewBox="0 0 23 21"><path d="M0 2 H8 L10 4 H23 V20 H0 Z" fill="#f8c84a"/><rect x="0" y="6" width="23" height="14" fill="#fcd462"/><rect x="6" y="13" width="11" height="5" fill="#2a7dd8"/><rect x="8" y="14" width="7" height="7" fill="#1a5fb4"/></svg>
<div style="left:295px;top:728px;width:48px;height:40px;background:#2e2e2e;"></div>
<svg style="left:306px;top:737px;" width="25" height="24" viewBox="0 0 25 24"><rect x="6" y="1" width="19" height="22" rx="1.5" fill="#21a366"/><rect x="15" y="1" width="10" height="11" fill="#33c481"/><rect x="6" y="12" width="19" height="11" fill="#107c41"/><rect x="15" y="12" width="10" height="11" fill="#185c37"/><rect x="0" y="5" width="13" height="13" rx="1" fill="#107c41"/><text x="3" y="15.5" font-family="Liberation Sans" font-weight="700" font-size="10" fill="#fff">X</text></svg>
<svg style="left:356px;top:736px;" width="24" height="24" viewBox="0 0 24 24"><circle cx="12" cy="13" r="11" fill="#ff7139"/><path d="M3 6 Q6 1 12 1 Q20 1 23 9 Q23 3 16 1 Q22 5 22 11 Z" fill="#ffbd4f"/><circle cx="12.5" cy="13" r="6" fill="#7542e5"/><path d="M6 12 Q8 6 14 7 Q11 9 12 12 Z" fill="#ff9640"/></svg>
<svg style="left:405px;top:736px;" width="26" height="26" viewBox="0 0 26 26"><circle cx="12" cy="12" r="12" fill="#db4437"/><path d="M12 12 L1.6 6 A12 12 0 0 0 12 24 Z" fill="#0f9d58"/><path d="M12 12 L22.4 6 A12 12 0 0 1 12 24 Z" fill="#f4b400"/><path d="M12 6 H22.4 A12 12 0 0 0 1.6 6 L6.8 15 A6 6 0 0 1 12 6 Z" fill="#db4437"/><circle cx="12" cy="12" r="5.6" fill="#fff"/><circle cx="12" cy="12" r="4.4" fill="#4285f4"/><circle cx="19" cy="19" r="6.5" fill="#777"/><circle cx="19" cy="19" r="5" fill="#9a9a9a"/><path d="M15 17 H23 M15 20 H23" stroke="#333" stroke-width="1.2"/></svg>
<svg style="left:454px;top:736px;" width="23" height="23" viewBox="0 0 23 23"><circle cx="11.5" cy="11.5" r="11.5" fill="#1ed760"/><path d="M5 8 Q12 5.5 18.5 9 M6 11.5 Q12 9.5 17.5 12.5 M7 15 Q12 13 16.5 15.5" fill="none" stroke="#000" stroke-width="1.8" stroke-linecap="round"/></svg>
<svg style="left:505px;top:736px;" width="18" height="24" viewBox="0 0 18 24"><rect x="0" y="0" width="18" height="24" fill="#fff"/><rect x="2" y="2" width="14" height="4" fill="#101010"/><rect x="2.0" y="8" width="2.4" height="2.4" fill="#101010"/><rect x="5.6" y="8" width="2.4" height="2.4" fill="#101010"/><rect x="9.2" y="8" width="2.4" height="2.4" fill="#101010"/><rect x="12.8" y="8" width="2.4" height="2.4" fill="#101010"/><rect x="2.0" y="12" width="2.4" height="2.4" fill="#101010"/><rect x="5.6" y="12" width="2.4" height="2.4" fill="#101010"/><rect x="9.2" y="12" width="2.4" height="2.4" fill="#101010"/><rect x="12.8" y="12" width="2.4" height="2.4" fill="#101010"/><rect x="2.0" y="16" width="2.4" height="2.4" fill="#101010"/><rect x="5.6" y="16" width="2.4" height="2.4" fill="#101010"/><rect x="9.2" y="16" width="2.4" height="2.4" fill="#101010"/><rect x="12.8" y="16" width="2.4" height="2.4" fill="#101010"/><rect x="2.0" y="20" width="2.4" height="2.4" fill="#101010"/><rect x="5.6" y="20" width="2.4" height="2.4" fill="#101010"/><rect x="9.2" y="20" width="2.4" height="2.4" fill="#101010"/><rect x="12.8" y="20" width="2.4" height="2.4" fill="#101010"/></svg>
<svg style="left:552px;top:736px;" width="24" height="24" viewBox="0 0 24 24"><path d="M1 14 Q0 5 10 3 Q20 2 21 10 Q22 14 17 14 Q13 14 14 18 Q14 23 8 22 Q2 21 1 14 Z" fill="#a8c8e8"/><circle cx="6" cy="10" r="1.6" fill="#e94e3c"/><circle cx="10" cy="6.5" r="1.6" fill="#f6c143"/><circle cx="15" cy="7" r="1.6" fill="#5cb85c"/><circle cx="6" cy="15" r="1.6" fill="#3e7bc4"/><path d="M23 1 L13 18 L11.5 20 L12 17.5 L21.5 0.5 Z" fill="#c8915a"/></svg>
<svg style="left:601px;top:737px;" width="22" height="22" viewBox="0 0 22 22"><rect width="22" height="22" rx="3" fill="#b30b00"/><path d="M5 17 Q8 13 10 8 Q11 4 11 5 Q12 9 17 14 Q13 13 6 16 Z" fill="none" stroke="#fff" stroke-width="1.4"/></svg>
<div style="left:201px;top:766px;width:40px;height:2px;background:#76b9ed;"></div>
<div style="left:250px;top:766px;width:40px;height:2px;background:#76b9ed;"></div>
<div style="left:295px;top:766px;width:48px;height:2px;background:#76b9ed;"></div>
<div style="left:397px;top:766px;width:39px;height:2px;background:#76b9ed;"></div>
<div style="left:446px;top:766px;width:40px;height:2px;background:#76b9ed;"></div>
<div style="left:495px;top:766px;width:40px;height:2px;background:#76b9ed;"></div>
<div style="left:544px;top:766px;width:40px;height:2px;background:#76b9ed;"></div>
<div style="left:593px;top:766px;width:39px;height:2px;background:#76b9ed;"></div>
<svg style="left:1117px;top:744px;" width="13" height="8" viewBox="0 0 13 8"><path d="M1 7 L6.5 1.5 L12 7" fill="none" stroke="#fff" stroke-width="1.2"/></svg>
<svg style="left:1142px;top:740px;" width="12" height="15" viewBox="0 0 12 15"><rect x="1" y="4" width="7" height="7" rx="1" fill="none" stroke="#fff" stroke-width="1.1"/><path d="M8 6 L11 4.5 V10.5 L8 9" fill="none" stroke="#fff" stroke-width="1.1"/><path d="M2 1.5 Q4.5 0 7 1.5 M2 13.5 Q4.5 15 7 13.5" fill="none" stroke="#fff"/></svg>
<svg style="left:1163px;top:741px;" width="17" height="15" viewBox="0 0 17 15"><rect x="3.5" y="1.5" width="13" height="9" fill="none" stroke="#fff" stroke-width="1.1"/><rect x="0.5" y="0.5" width="5" height="4" fill="#101010" stroke="#fff"/><path d="M10 10.5 V13.5 M6 13.5 H14 M2.5 4.5 V13.5" stroke="#fff" stroke-width="1.1"/></svg>
<svg style="left:1187px;top:741px;" width="17" height="14" viewBox="0 0 17 14"><path d="M1 4.5 H4 L8 1 V13 L4 9.5 H1 Z" fill="none" stroke="#fff" stroke-width="1.1"/><path d="M10.5 4.5 Q12 7 10.5 9.5 M13 2.5 Q15.5 7 13 11.5 M15 0.5 Q18.5 7 15 13.5" fill="none" stroke="#fff" stroke-width="1"/></svg>
<span style="left:1214.95px;top:742.34px;font-size:12px;line-height:12px;color:#fff;transform:scaleX(0.7799);transform-origin:0 0;">ESP</span>
<span style="left:1260.92px;top:732.84px;font-size:12px;line-height:12px;color:#fff;transform:scaleX(0.9259);transform-origin:0 0;">12:38</span>
<span style="left:1251.39px;top:750.84px;font-size:12px;line-height:12px;color:#fff;transform:scaleX(1.0088);transform-origin:0 0;">7/2/2023</span>
<svg style="left:1319px;top:741px;" width="17" height="16" viewBox="0 0 17 16"><path d="M0.5 0.5 H16.5 V11.5 H11 L8.5 14.5 L6 11.5 H0.5 Z" fill="none" stroke="#fff" stroke-width="1.1"/></svg>
<div style="left:1355px;top:728px;width:1px;height:40px;background:#555;"></div>
</body></html>
